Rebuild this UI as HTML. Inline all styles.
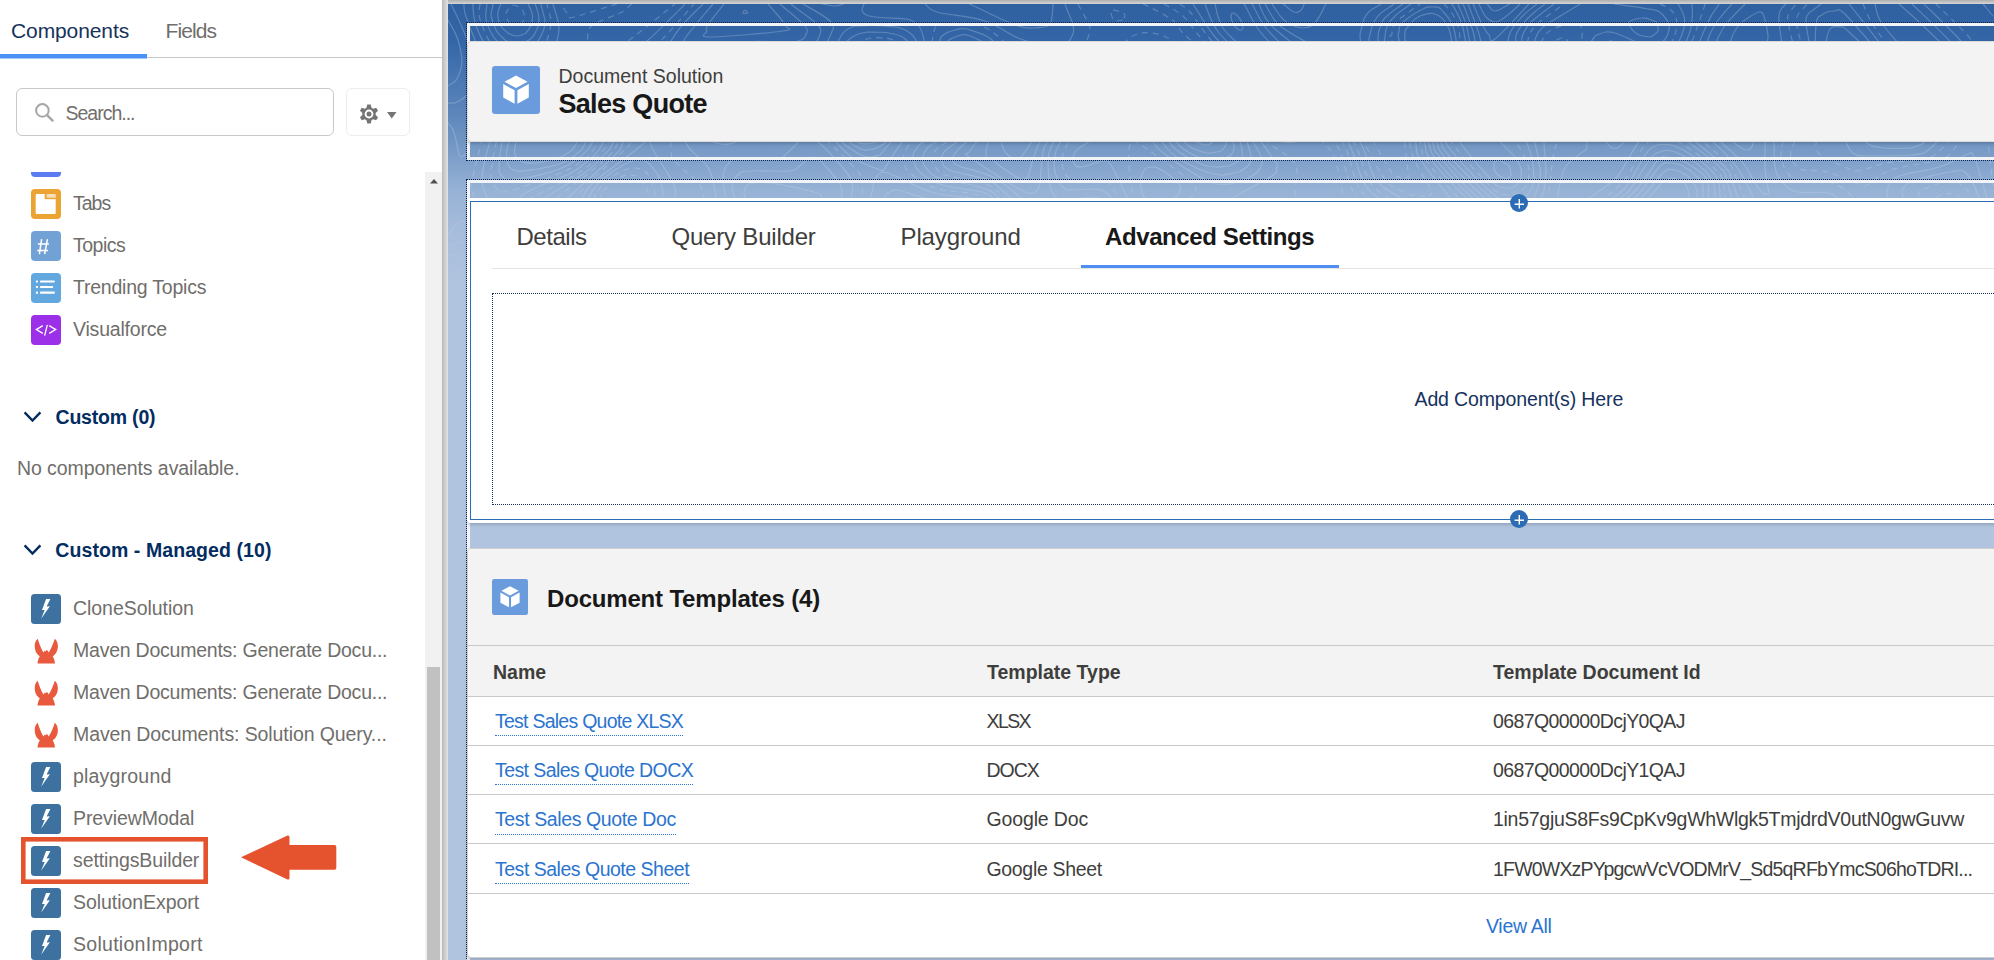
<!DOCTYPE html><html><head><meta charset="utf-8"><style>
html,body{margin:0;padding:0;width:1994px;height:960px;overflow:hidden;background:#fff;position:relative;font-family:"Liberation Sans", sans-serif}
.t{position:absolute;white-space:nowrap;line-height:1;font-family:"Liberation Sans", sans-serif}
</style></head><body>
<div class="t" style="left:11.0px;top:20.23px;font-size:21px;color:#16325c;letter-spacing:-0.100px;">Components</div>
<div class="t" style="left:165.5px;top:20.23px;font-size:21px;color:#706e6b;letter-spacing:-0.900px;">Fields</div>
<div style="position:absolute;left:0px;top:54px;width:147px;height:4px;background:#4b91f5"></div>
<div style="position:absolute;left:0px;top:58px;width:147px;height:1px;background:#a5c8fa"></div>
<div style="position:absolute;left:147px;top:57px;width:295px;height:1px;background:#c9c9c9"></div>
<div style="position:absolute;left:16px;top:88px;width:316px;height:46px;border:1px solid #c9c9c9;border-radius:6px;background:#fff"></div>
<svg width="20" height="20" viewBox="0 0 20 20" style="position:absolute;left:35px;top:103px"><circle cx="7.4" cy="7.4" r="6.3" fill="none" stroke="#a6a6a6" stroke-width="2"/><path d="M11.9 11.9 L17.6 17.6" stroke="#a6a6a6" stroke-width="2.4" stroke-linecap="round"/></svg>
<div class="t" style="left:65.5px;top:103.50px;font-size:19.5px;color:#706e6b;letter-spacing:-1.000px;">Search...</div>
<div style="position:absolute;left:346px;top:88px;width:62px;height:46px;border:1px solid #ececec;border-radius:6px;background:#fff"></div>
<svg width="20" height="20" viewBox="0 0 20 20" style="position:absolute;left:359.3px;top:104.3px"><g fill="#747474"><circle cx="10" cy="10" r="6.7"/><path d="M8.2 0.6 L11.8 0.6 L12.6 4.5 L7.4 4.5 Z" transform="rotate(0 10 10)"/><path d="M8.2 0.6 L11.8 0.6 L12.6 4.5 L7.4 4.5 Z" transform="rotate(60 10 10)"/><path d="M8.2 0.6 L11.8 0.6 L12.6 4.5 L7.4 4.5 Z" transform="rotate(120 10 10)"/><path d="M8.2 0.6 L11.8 0.6 L12.6 4.5 L7.4 4.5 Z" transform="rotate(180 10 10)"/><path d="M8.2 0.6 L11.8 0.6 L12.6 4.5 L7.4 4.5 Z" transform="rotate(240 10 10)"/><path d="M8.2 0.6 L11.8 0.6 L12.6 4.5 L7.4 4.5 Z" transform="rotate(300 10 10)"/></g><circle cx="10" cy="10" r="4.4" fill="#fff"/><circle cx="10" cy="10" r="2.5" fill="#747474"/></svg>
<svg width="10" height="7" viewBox="0 0 10 7" style="position:absolute;left:387px;top:111.5px"><path d="M0 0 L9.5 0 L4.75 6.5 Z" fill="#747474"/></svg>
<div style="position:absolute;left:0;top:172px;width:425px;height:788px;overflow:hidden">
</div>
<div style="position:absolute;left:31px;top:172px;width:30px;height:5px;background:#5a7cf0;border-radius:0 0 4px 4px"></div>
<div style="position:absolute;left:31px;top:189px;width:30px;height:30px"><svg width="30" height="30" viewBox="0 0 30 30" style="position:absolute;left:0;top:0"><rect width="30" height="30" rx="4" fill="#eba434"/><rect x="4.7" y="4.9" width="20" height="20.2" rx="1.2" fill="#fff"/><path d="M13.7 4.9 H24.7 V10.2 H13.7 Z" fill="#eba434"/><rect x="15.6" y="5" width="9.1" height="3.7" rx="1" fill="#f9dfb8"/></svg></div>
<div class="t" style="left:73.0px;top:193.70px;font-size:19.5px;color:#706e6b;letter-spacing:-1.000px;">Tabs</div>
<div style="position:absolute;left:31px;top:231px;width:30px;height:30px"><svg width="30" height="30" viewBox="0 0 30 30" style="position:absolute;left:0;top:0"><rect width="30" height="30" rx="4" fill="#72a2d5"/><path d="M10.6 8.1 L8.4 23.1 M16.5 8.1 L13.6 23.1 M6.9 13.1 H17.9 M6.2 19.4 H17" stroke="#fff" stroke-width="1.5" fill="none"/></svg></div>
<div class="t" style="left:73.0px;top:235.70px;font-size:19.5px;color:#706e6b;letter-spacing:-0.500px;">Topics</div>
<div style="position:absolute;left:31px;top:273px;width:30px;height:30px"><svg width="30" height="30" viewBox="0 0 30 30" style="position:absolute;left:0;top:0"><rect width="30" height="30" rx="4" fill="#62a8de"/><g fill="#fff"><rect x="4.9" y="7.4" width="2.1" height="2.2" rx="0.5"/><rect x="8.9" y="7.4" width="15" height="2.2" rx="1"/><rect x="4.9" y="12.9" width="2.1" height="2.2" rx="0.5"/><rect x="8.9" y="12.9" width="13.3" height="2.2" rx="1"/><rect x="4.9" y="18.6" width="2.1" height="2.2" rx="0.5"/><rect x="8.9" y="18.6" width="15" height="2.2" rx="1"/></g></svg></div>
<div class="t" style="left:73.0px;top:277.70px;font-size:19.5px;color:#706e6b;letter-spacing:-0.220px;">Trending Topics</div>
<div style="position:absolute;left:31px;top:315px;width:30px;height:30px"><svg width="30" height="30" viewBox="0 0 30 30" style="position:absolute;left:0;top:0"><rect width="30" height="30" rx="4" fill="#9c2fe8"/><path d="M11.8 10.6 L5.3 14.6 L11.8 18.4 M18.2 10.6 L24.7 14.6 L18.2 18.4 M16.3 9.8 L13.6 20.6" stroke="#fff" stroke-width="1.3" fill="none"/></svg></div>
<div class="t" style="left:73.0px;top:319.70px;font-size:19.5px;color:#706e6b;letter-spacing:-0.200px;">Visualforce</div>
<svg width="20" height="12" viewBox="0 0 20 12" style="position:absolute;left:23px;top:410.5px"><path d="M1.6 1.4 L9.5 9.6 L17.4 1.4" fill="none" stroke="#032d60" stroke-width="2.4"/></svg>
<div class="t" style="left:55.5px;top:408.30px;font-size:19.5px;color:#032d60;font-weight:bold;letter-spacing:-0.200px;">Custom (0)</div>
<div class="t" style="left:17.0px;top:458.70px;font-size:19.5px;color:#706e6b;letter-spacing:-0.080px;">No components available.</div>
<svg width="20" height="12" viewBox="0 0 20 12" style="position:absolute;left:23px;top:543.5px"><path d="M1.6 1.4 L9.5 9.6 L17.4 1.4" fill="none" stroke="#032d60" stroke-width="2.4"/></svg>
<div class="t" style="left:55.3px;top:540.90px;font-size:19.5px;color:#032d60;font-weight:bold;letter-spacing:0.080px;">Custom - Managed (10)</div>
<div style="position:absolute;left:31px;top:594px;width:30px;height:30px"><svg width="30" height="30" viewBox="0 0 30 30" style="position:absolute;left:0;top:0"><rect x="0" y="0" width="30" height="30" rx="3.5" fill="#3c71a0"/><path d="M15.1 4.9 L19.4 4.9 L15.6 12.4 L18.9 12.2 L10.1 24.8 L13.7 16.1 L11 16.1 Z" fill="#fff"/></svg></div>
<div class="t" style="left:73.0px;top:598.70px;font-size:19.5px;color:#706e6b;letter-spacing:-0.050px;">CloneSolution</div>
<div style="position:absolute;left:31px;top:636px;width:30px;height:30px"><svg width="30" height="30" viewBox="0 0 30 30" style="position:absolute;left:0;top:0"><path d="M6.7 2.75 C5 4 3.5 7 3.7 10.5 C3.9 14.5 5.5 18 7.75 19.4 L8.8 20.25 C7.5 22.5 6.7 25 6.5 27.6 L24 27.6 C23.8 25 23 22.5 21.7 20.25 L22.75 19.4 C25 18 26.7 14.5 26.9 10.5 C27 7 25.5 4 23.8 2.75 C22.5 7 20.5 12 17.75 16.5 L16.7 14.8 L15.7 13.9 L14.8 15.25 L13.6 14.8 L12.3 16.5 C9.8 12 8 7 6.7 2.75 Z" fill="#e8593d"/></svg></div>
<div class="t" style="left:73.0px;top:640.70px;font-size:19.5px;color:#706e6b;letter-spacing:-0.230px;">Maven Documents: Generate Docu...</div>
<div style="position:absolute;left:31px;top:678px;width:30px;height:30px"><svg width="30" height="30" viewBox="0 0 30 30" style="position:absolute;left:0;top:0"><path d="M6.7 2.75 C5 4 3.5 7 3.7 10.5 C3.9 14.5 5.5 18 7.75 19.4 L8.8 20.25 C7.5 22.5 6.7 25 6.5 27.6 L24 27.6 C23.8 25 23 22.5 21.7 20.25 L22.75 19.4 C25 18 26.7 14.5 26.9 10.5 C27 7 25.5 4 23.8 2.75 C22.5 7 20.5 12 17.75 16.5 L16.7 14.8 L15.7 13.9 L14.8 15.25 L13.6 14.8 L12.3 16.5 C9.8 12 8 7 6.7 2.75 Z" fill="#e8593d"/></svg></div>
<div class="t" style="left:73.0px;top:682.70px;font-size:19.5px;color:#706e6b;letter-spacing:-0.230px;">Maven Documents: Generate Docu...</div>
<div style="position:absolute;left:31px;top:720px;width:30px;height:30px"><svg width="30" height="30" viewBox="0 0 30 30" style="position:absolute;left:0;top:0"><path d="M6.7 2.75 C5 4 3.5 7 3.7 10.5 C3.9 14.5 5.5 18 7.75 19.4 L8.8 20.25 C7.5 22.5 6.7 25 6.5 27.6 L24 27.6 C23.8 25 23 22.5 21.7 20.25 L22.75 19.4 C25 18 26.7 14.5 26.9 10.5 C27 7 25.5 4 23.8 2.75 C22.5 7 20.5 12 17.75 16.5 L16.7 14.8 L15.7 13.9 L14.8 15.25 L13.6 14.8 L12.3 16.5 C9.8 12 8 7 6.7 2.75 Z" fill="#e8593d"/></svg></div>
<div class="t" style="left:73.0px;top:724.70px;font-size:19.5px;color:#706e6b;letter-spacing:-0.100px;">Maven Documents: Solution Query...</div>
<div style="position:absolute;left:31px;top:762px;width:30px;height:30px"><svg width="30" height="30" viewBox="0 0 30 30" style="position:absolute;left:0;top:0"><rect x="0" y="0" width="30" height="30" rx="3.5" fill="#3c71a0"/><path d="M15.1 4.9 L19.4 4.9 L15.6 12.4 L18.9 12.2 L10.1 24.8 L13.7 16.1 L11 16.1 Z" fill="#fff"/></svg></div>
<div class="t" style="left:73.0px;top:766.70px;font-size:19.5px;color:#706e6b;letter-spacing:0.200px;">playground</div>
<div style="position:absolute;left:31px;top:804px;width:30px;height:30px"><svg width="30" height="30" viewBox="0 0 30 30" style="position:absolute;left:0;top:0"><rect x="0" y="0" width="30" height="30" rx="3.5" fill="#3c71a0"/><path d="M15.1 4.9 L19.4 4.9 L15.6 12.4 L18.9 12.2 L10.1 24.8 L13.7 16.1 L11 16.1 Z" fill="#fff"/></svg></div>
<div class="t" style="left:73.0px;top:808.70px;font-size:19.5px;color:#706e6b;letter-spacing:-0.100px;">PreviewModal</div>
<div style="position:absolute;left:31px;top:846px;width:30px;height:30px"><svg width="30" height="30" viewBox="0 0 30 30" style="position:absolute;left:0;top:0"><rect x="0" y="0" width="30" height="30" rx="3.5" fill="#3c71a0"/><path d="M15.1 4.9 L19.4 4.9 L15.6 12.4 L18.9 12.2 L10.1 24.8 L13.7 16.1 L11 16.1 Z" fill="#fff"/></svg></div>
<div class="t" style="left:73.0px;top:850.70px;font-size:19.5px;color:#706e6b;letter-spacing:-0.110px;">settingsBuilder</div>
<div style="position:absolute;left:31px;top:888px;width:30px;height:30px"><svg width="30" height="30" viewBox="0 0 30 30" style="position:absolute;left:0;top:0"><rect x="0" y="0" width="30" height="30" rx="3.5" fill="#3c71a0"/><path d="M15.1 4.9 L19.4 4.9 L15.6 12.4 L18.9 12.2 L10.1 24.8 L13.7 16.1 L11 16.1 Z" fill="#fff"/></svg></div>
<div class="t" style="left:73.0px;top:892.70px;font-size:19.5px;color:#706e6b;letter-spacing:-0.050px;">SolutionExport</div>
<div style="position:absolute;left:31px;top:930px;width:30px;height:30px"><svg width="30" height="30" viewBox="0 0 30 30" style="position:absolute;left:0;top:0"><rect x="0" y="0" width="30" height="30" rx="3.5" fill="#3c71a0"/><path d="M15.1 4.9 L19.4 4.9 L15.6 12.4 L18.9 12.2 L10.1 24.8 L13.7 16.1 L11 16.1 Z" fill="#fff"/></svg></div>
<div class="t" style="left:73.0px;top:934.70px;font-size:19.5px;color:#706e6b;letter-spacing:0.280px;">SolutionImport</div>
<svg width="340" height="60" viewBox="0 0 340 60" style="position:absolute;left:0;top:830px"><rect x="23.3" y="9.3" width="182.4" height="42.4" fill="none" stroke="#e4532e" stroke-width="4.6"/><path d="M241 27.3 L287.5 5.5 Q289.5 5 289.5 7 L289.5 15 L334.5 15 Q336.3 15 336.3 17 L336.3 37.8 Q336.3 39.8 334.5 39.8 L289.5 39.8 L289.5 48 Q289.5 50 287.5 49.5 Z" fill="#e4532e"/></svg>
<div style="position:absolute;left:425px;top:172px;width:17px;height:788px;background:#f1f1f1"></div>
<div style="position:absolute;left:427px;top:667px;width:13px;height:293px;background:#c1c1c1"></div>
<svg width="8" height="5" viewBox="0 0 8 5" style="position:absolute;left:429.5px;top:178.5px"><path d="M0 4.5 L4 0 L8 4.5 Z" fill="#505050"/></svg>
<div style="position:absolute;left:442px;top:0px;width:6px;height:960px;background:linear-gradient(to right,#b9b9b9,#e3e3e3)"></div>
<div style="position:absolute;left:448px;top:0;width:1546px;height:960px;overflow:hidden;background:#b0c4df">
<div style="position:absolute;left:0;top:4px;width:1546px;height:300px;background:linear-gradient(to bottom,#2f60a0 0px,#3466a7 38px,#6089bd 115px,#779ac6 146px,#87a6ce 166px,#96b2d5 186px,#a6bcdb 225px,#b0c4df 280px)"></div>
<svg width="1546" height="330" viewBox="0 0 1546 330" style="position:absolute;left:0;top:4px"><defs><linearGradient id="fg" x1="0" y1="0" x2="0" y2="1"><stop offset="0" stop-color="#fff" stop-opacity="1"/><stop offset="0.5" stop-color="#fff" stop-opacity="0.8"/><stop offset="0.9" stop-color="#fff" stop-opacity="0"/></linearGradient><mask id="fm"><rect width="1546" height="330" fill="url(#fg)"/></mask></defs><g mask="url(#fm)" fill="none" stroke="rgba(255,255,255,0.22)" stroke-width="1.2"><path d="M573 153C577 148 591 128 595 120C599 112 599 112 599 108C598 104 596 99 592 96C588 93 580 91 576 90C572 89 570 90 567 92C564 93 562 93 559 99C557 105 555 122 554 129C553 136 553 138 554 141C555 144 556 147 558 149C560 151 564 155 567 155C570 156 572 153 573 153M944 132C944 130 947 121 947 117C946 113 944 108 942 105C940 102 936 100 933 100C930 99 926 100 924 102C922 104 922 108 922 111C922 114 925 118 927 122C929 126 934 131 936 133C938 135 941 134 942 134C943 134 944 132 944 132M88 159C92 158 102 157 108 155C114 153 119 150 123 147C126 144 128 141 129 138C130 135 129 132 127 129C126 126 122 124 118 123C114 122 107 120 102 120C97 120 91 121 87 122C83 123 81 123 78 126C75 129 71 133 69 137C67 141 66 146 67 150C68 154 71 157 75 158C79 160 86 159 88 159M737 285C739 284 745 280 747 276C750 272 751 268 751 264C751 260 750 255 747 252C744 249 740 247 735 247C730 248 722 251 718 255C714 259 711 266 711 270C710 274 712 277 714 279C715 281 717 284 720 285C723 286 726 287 729 287C732 287 736 285 737 285M53 0C52 2 50 6 50 9C49 12 51 18 52 21C54 24 57 27 60 29C63 31 66 32 69 32C72 32 76 30 78 29C80 27 82 24 83 21C84 18 85 12 84 9C83 6 81 2 80 0M580 174C581 169 585 154 589 144C593 134 602 124 605 117C608 110 607 108 607 105C607 102 604 98 602 96C600 94 599 92 594 90C590 88 578 85 573 84C568 84 566 85 563 87C560 89 558 86 554 96C550 106 540 137 538 147C537 157 541 152 545 156C549 160 559 167 564 170C569 174 570 174 573 175C576 176 579 174 580 174M91 165C94 164 107 162 114 159C121 156 128 151 132 147C136 143 138 139 138 135C139 131 137 126 134 123C131 120 126 118 120 116C114 115 105 114 99 114C93 113 89 114 84 115C79 117 74 119 70 123C66 127 62 135 60 141C58 147 58 156 60 160C62 165 64 166 69 167C74 168 87 165 91 165M760 141C762 140 767 137 767 135C767 133 765 129 762 127C759 125 754 123 750 122C746 122 743 124 741 125C739 126 740 127 740 129C741 131 742 133 744 135C746 137 750 139 753 140C756 141 759 141 760 141M1303 144C1304 143 1305 140 1305 138C1304 136 1304 134 1302 132C1300 130 1296 129 1293 128C1290 128 1285 128 1284 129C1282 130 1282 133 1283 135C1284 137 1287 140 1290 142C1293 144 1297 146 1299 146C1301 146 1303 144 1303 144M623 267C628 266 646 264 653 261C660 258 663 255 666 252C668 249 667 247 667 243C666 239 665 234 663 230C661 226 659 222 657 219C654 216 651 213 648 211C645 210 640 209 636 210C632 210 628 211 624 212C620 214 615 217 612 219C609 221 608 223 606 227C604 231 603 238 603 243C603 248 604 254 605 258C607 262 609 264 612 266C615 267 621 267 623 267M740 294C743 292 752 287 755 282C759 277 760 269 761 264C761 259 760 255 758 252C757 249 756 246 753 244C750 241 742 239 738 238C734 238 730 239 726 241C722 243 716 246 712 249C708 252 705 255 703 258C701 261 700 264 700 267C700 270 701 275 703 279C706 283 710 289 714 291C718 294 722 296 726 296C730 296 738 294 740 294M1342 300C1343 299 1346 296 1347 294C1348 292 1348 290 1347 288C1346 286 1343 281 1341 280C1339 278 1337 278 1335 279C1333 280 1331 285 1330 288C1329 291 1330 295 1331 297C1332 299 1333 301 1335 301C1337 302 1341 300 1342 300M45 0C45 2 43 8 43 12C44 16 46 22 48 26C50 30 54 33 57 36C60 38 65 39 69 39C73 39 78 38 81 36C84 34 87 30 88 27C90 24 91 20 91 15C91 10 88 2 87 0M795 24C795 22 794 17 792 15C790 12 788 10 786 9C784 9 783 10 783 12C783 14 784 19 786 21C787 23 790 26 792 26C794 27 795 24 795 24M586 189C587 188 590 188 592 180C593 172 593 154 596 144C600 134 609 124 612 117C615 110 615 108 615 105C615 102 614 99 611 96C609 93 605 90 600 87C596 84 590 82 585 81C580 80 574 79 570 80C566 80 564 81 561 82C558 84 556 84 552 91C548 98 544 114 539 123C534 132 525 142 522 147C519 152 513 147 521 153C530 159 562 180 573 186C584 192 584 188 586 189M77 174C83 173 102 169 111 165C120 162 127 157 132 153C137 149 139 147 141 144C143 141 145 139 145 135C145 131 144 124 141 120C138 116 132 113 126 111C120 109 110 108 102 108C94 107 87 108 81 110C75 111 71 114 68 117C64 120 62 122 60 126C57 130 56 132 54 138C53 144 51 159 51 165C51 171 53 170 54 172C55 174 56 175 60 176C64 176 74 174 77 174M773 147C774 146 777 143 778 141C778 139 779 138 777 135C776 132 773 126 768 122C763 119 752 116 747 114C742 113 740 114 737 114C734 114 732 114 731 117C730 120 728 125 730 129C732 133 736 139 741 142C746 146 754 148 759 149C764 150 771 147 773 147M1321 189C1320 184 1317 171 1317 162C1316 153 1318 141 1317 135C1317 129 1316 128 1314 126C1312 124 1309 122 1305 121C1301 119 1295 118 1290 118C1285 117 1279 116 1275 117C1271 117 1268 118 1266 119C1264 121 1264 124 1264 126C1264 128 1261 126 1267 132C1272 138 1287 150 1295 159C1302 168 1307 180 1311 185C1315 190 1315 189 1317 190C1319 191 1320 189 1321 189M740 303C743 301 754 298 759 294C764 289 767 283 768 276C769 269 767 258 766 252C765 246 764 245 762 242C760 239 757 236 754 234C751 232 748 231 744 231C740 231 742 229 732 232C722 236 696 250 687 253C678 256 685 255 681 249C677 242 666 221 661 213C656 205 654 206 651 204C648 202 646 201 642 201C638 201 635 201 630 202C625 203 616 206 612 207C608 209 605 210 603 213C601 216 599 220 598 225C597 230 597 239 597 246C597 253 599 261 600 265C601 270 603 272 606 274C609 275 606 276 618 275C630 273 666 260 681 263C696 267 704 291 711 298C718 304 721 303 726 303C731 304 738 303 740 303M1343 312C1345 310 1354 305 1356 301C1358 297 1359 294 1357 288C1355 282 1348 270 1344 265C1340 260 1335 259 1332 259C1329 259 1328 263 1326 265C1324 268 1324 268 1323 274C1322 280 1321 297 1321 303C1321 309 1322 308 1323 310C1324 312 1326 314 1329 315C1332 315 1341 312 1343 312M241 294C243 292 252 282 254 279C256 276 254 274 252 273C251 272 250 270 246 270C242 270 235 271 231 273C227 274 225 279 224 282C223 285 224 289 225 291C225 293 226 295 228 296C230 297 232 297 234 297C236 297 240 294 241 294M39 0C39 2 37 10 38 15C39 20 42 27 45 32C48 37 53 41 57 44C61 46 64 47 69 47C74 47 80 45 84 42C88 40 91 36 93 32C95 28 97 23 97 18C97 13 93 3 93 0M767 0C768 3 769 12 772 18C774 24 777 27 783 33C789 39 804 52 810 56C816 60 816 59 819 59C822 60 826 59 828 59C830 58 831 56 832 54C832 52 834 53 830 48C826 43 816 33 810 25C804 17 799 4 796 0M1311 45C1312 44 1315 43 1317 41C1319 39 1320 37 1320 33C1320 29 1318 20 1317 16C1316 12 1315 7 1311 8C1307 9 1296 16 1291 21C1287 26 1284 32 1283 36C1281 40 1283 40 1284 42C1285 44 1284 44 1288 45C1293 46 1307 45 1311 45M795 330C791 326 778 318 775 306C771 294 775 268 774 258C774 248 772 247 770 243C768 239 765 234 762 231C759 228 756 227 753 225C750 224 750 222 741 224C732 226 710 236 702 238C694 241 694 240 690 239C686 238 686 238 681 232C676 227 668 210 663 204C658 198 657 198 654 196C651 194 651 193 645 193C639 193 624 196 618 196C612 196 612 196 609 194C606 192 604 189 602 183C601 177 600 163 600 156C600 149 601 148 604 141C608 134 619 121 621 114C624 107 624 104 622 99C620 94 615 89 609 86C603 82 594 79 588 77C582 75 576 74 570 75C564 76 559 78 555 81C551 84 550 86 546 93C543 100 539 114 533 123C527 132 513 142 509 147C504 152 505 154 505 156C506 158 503 159 511 162C518 165 536 168 549 175C562 183 579 200 586 207C593 214 589 209 590 219C592 229 592 257 593 267C595 277 595 277 597 280C599 283 598 285 606 284C614 283 634 276 645 275C656 273 664 270 675 275C686 281 705 301 714 306C723 312 721 310 729 311C737 312 756 313 762 314C768 315 765 315 766 318C767 321 767 328 767 330M1011 210C1010 208 1009 204 1003 195C996 186 978 165 973 156C967 147 969 150 968 141C966 132 965 114 963 105C961 96 958 94 954 89C950 85 944 81 939 79C934 77 929 76 924 76C919 76 914 77 909 79C904 81 899 84 896 87C892 90 891 93 890 96C890 99 888 98 891 105C895 112 907 128 912 138C918 148 921 161 924 168C927 175 926 175 932 180C937 185 945 190 957 196C969 201 996 209 1005 211C1014 214 1010 212 1011 212C1012 212 1011 210 1011 210M295 93C295 92 298 87 297 87C296 86 289 89 288 90C286 91 287 93 288 93C289 94 294 93 295 93M772 156C774 155 781 153 783 151C785 149 786 147 786 144C786 141 785 136 784 132C782 128 780 126 777 123C773 120 768 116 763 114C757 112 749 109 744 108C739 107 736 106 732 107C728 107 725 107 723 110C721 113 719 118 720 123C722 128 726 136 731 141C736 146 743 150 750 153C757 155 768 155 772 156M1323 330C1328 328 1345 320 1352 315C1359 310 1362 308 1364 303C1366 298 1368 296 1365 288C1362 280 1351 260 1348 252C1345 244 1344 242 1346 237C1347 232 1350 227 1357 222C1364 217 1383 211 1389 207C1395 203 1393 201 1391 198C1390 195 1387 190 1380 189C1373 187 1358 190 1350 188C1342 187 1339 183 1335 179C1331 174 1328 171 1327 162C1325 153 1327 134 1326 126C1325 118 1324 119 1321 117C1318 115 1318 115 1308 113C1298 112 1269 108 1260 108C1251 108 1253 111 1252 114C1251 117 1246 118 1253 126C1259 134 1279 148 1290 165C1301 182 1314 212 1318 225C1323 238 1320 230 1319 243C1318 256 1314 292 1313 306C1313 320 1316 326 1317 330M1519 234C1520 232 1527 229 1530 225C1533 221 1534 216 1534 210C1534 204 1532 196 1529 189C1527 182 1522 173 1518 169C1514 165 1512 166 1503 168C1494 169 1473 174 1465 177C1457 180 1458 181 1456 183C1454 185 1454 186 1454 189C1455 192 1453 192 1458 198C1464 204 1480 219 1487 225C1494 231 1498 233 1503 234C1508 236 1516 234 1519 234M228 312C231 310 240 307 246 303C252 298 260 290 265 285C269 280 271 276 271 273C272 270 271 266 269 264C267 262 262 261 258 260C254 259 248 259 243 259C238 260 232 261 228 262C224 263 221 264 219 267C216 270 214 273 213 279C213 285 214 298 215 303C216 308 217 310 219 311C221 313 227 312 228 312M945 297C946 296 949 292 949 288C949 284 947 278 945 275C943 272 939 269 936 268C933 267 929 268 927 269C925 270 923 272 923 276C923 280 925 287 928 291C930 295 933 298 936 299C939 300 943 297 945 297M91 330C90 328 85 321 81 319C77 316 71 314 66 314C61 314 55 316 51 319C47 321 42 328 40 330M757 0C759 5 763 19 771 29C779 39 796 53 804 60C812 66 816 66 822 67C828 68 836 67 840 66C844 65 845 62 846 60C847 58 849 57 844 51C840 45 824 32 818 24C811 16 807 4 804 0M1039 0C1041 1 1043 7 1047 7C1051 7 1059 1 1062 0M1297 0C1293 4 1282 15 1277 21C1273 27 1271 32 1269 36C1268 40 1267 45 1268 48C1269 51 1266 55 1275 56C1284 58 1311 58 1320 58C1329 57 1328 57 1331 54C1333 51 1334 49 1334 42C1334 35 1330 19 1331 12C1331 5 1336 2 1338 0M1488 78C1489 77 1491 74 1491 72C1492 70 1492 66 1491 63C1490 60 1487 55 1485 54C1483 52 1480 50 1479 53C1478 55 1478 66 1479 70C1480 74 1480 74 1482 76C1484 77 1487 78 1488 78M292 108C294 107 299 106 303 103C307 101 311 97 314 93C317 89 321 84 321 81C322 78 321 77 319 75C317 73 313 72 309 71C305 71 302 71 297 72C292 73 286 76 282 78C278 80 275 82 273 85C271 87 269 90 269 93C268 96 269 100 271 102C272 104 275 107 279 108C283 109 290 108 292 108M803 330C800 324 790 308 786 294C782 280 780 256 777 245C774 233 768 229 765 225C762 220 760 220 756 219C752 218 752 216 744 218C736 220 714 228 705 230C696 232 697 232 693 230C689 229 686 228 682 222C677 216 670 203 666 197C662 191 660 190 657 188C654 186 654 185 648 185C642 185 630 186 624 186C618 186 618 186 615 183C612 181 609 176 608 171C606 166 606 158 607 153C607 148 608 146 612 139C616 133 627 120 630 114C634 108 632 108 632 105C632 102 632 100 629 96C626 92 621 86 615 83C609 79 602 76 594 74C586 72 576 70 570 71C564 71 559 74 555 76C551 79 550 79 545 87C541 95 536 112 528 122C520 132 503 141 497 147C492 153 494 154 494 156C493 158 495 160 496 162C498 164 498 165 504 167C510 169 527 172 534 174C541 176 540 174 547 180C554 186 572 202 578 210C585 218 584 219 586 231C587 243 587 271 588 282C589 293 589 292 591 294C593 297 592 299 600 297C608 294 628 283 639 281C650 278 660 280 666 281C672 282 671 281 678 286C685 291 697 304 708 310C719 316 736 318 744 321C752 325 753 329 755 330M1177 123C1179 121 1187 115 1189 111C1192 107 1193 103 1193 99C1192 95 1189 89 1185 85C1181 82 1174 80 1170 79C1166 78 1166 80 1164 81C1162 82 1160 83 1159 87C1158 91 1156 99 1156 105C1157 111 1162 118 1164 121C1166 124 1168 124 1170 124C1172 124 1175 123 1177 123M55 231C56 230 60 230 62 225C63 220 63 210 65 204C67 198 70 195 73 192C77 189 79 188 87 184C95 180 114 174 123 169C132 164 136 160 141 156C146 152 150 148 152 144C155 140 155 138 156 135C157 132 157 127 155 123C154 119 152 115 149 111C146 107 143 104 138 101C133 99 129 96 120 95C111 94 93 94 84 95C75 96 70 98 65 102C59 106 54 110 50 117C46 124 44 131 41 141C38 151 34 166 34 177C35 188 42 199 44 207C46 215 46 221 47 225C48 229 50 229 51 230C52 231 54 231 55 231M781 162C783 161 790 158 792 156C794 154 795 151 794 147C794 143 792 137 790 132C787 127 784 123 780 119C776 116 772 114 765 110C758 107 742 103 735 101C728 99 726 98 723 99C720 99 716 100 714 102C712 104 712 108 712 111C711 114 711 118 713 123C716 128 720 138 726 144C733 150 746 157 753 160C760 163 763 163 768 163C773 163 779 162 781 162M1516 240C1519 238 1528 236 1532 231C1536 226 1539 219 1540 213C1541 207 1541 205 1539 195C1536 185 1530 160 1526 153C1523 146 1524 149 1518 151C1512 153 1502 160 1491 163C1480 167 1463 168 1455 171C1447 173 1446 174 1444 177C1441 180 1439 185 1439 189C1440 193 1437 193 1446 201C1455 209 1484 229 1494 236C1504 242 1502 239 1506 240C1510 241 1514 240 1516 240M441 282C443 280 450 276 453 273C456 270 457 265 456 261C456 257 453 252 450 249C447 246 442 245 438 245C434 245 429 248 426 251C423 254 423 259 423 264C423 269 425 276 428 279C431 282 438 282 441 282M214 330C219 327 233 320 243 313C253 306 265 295 272 288C280 281 284 275 286 270C289 265 289 261 287 258C285 255 282 254 276 253C270 252 258 251 249 251C240 251 231 253 225 255C219 256 215 258 212 261C209 264 207 262 206 273C204 284 204 320 203 330M1065 330C1067 328 1074 318 1076 315C1079 312 1078 310 1078 309C1077 308 1081 305 1075 306C1070 307 1051 312 1045 315C1039 318 1040 318 1039 321C1038 324 1038 328 1038 330M97 330C95 327 89 318 84 315C79 311 72 309 66 309C60 309 53 311 48 315C43 318 36 327 33 330M25 0C25 4 25 13 28 21C30 29 38 43 42 50C46 57 50 59 54 62C58 65 64 67 69 67C74 67 81 65 87 61C93 57 102 48 106 42C110 36 111 31 111 24C111 17 106 4 105 0M745 0C749 6 758 22 767 33C777 44 795 60 804 66C813 73 812 72 822 73C832 75 855 70 864 76C873 82 871 98 877 108C883 118 894 126 900 138C907 150 910 168 915 177C919 186 923 188 928 192C933 196 935 197 945 202C955 207 973 212 987 219C1001 227 1018 243 1029 248C1040 254 1047 252 1053 252C1059 252 1065 249 1067 246C1070 243 1070 238 1070 234C1069 230 1072 231 1065 225C1058 219 1039 212 1026 201C1013 190 992 167 984 157C976 147 979 150 977 141C975 132 974 112 971 102C968 92 962 86 957 81C952 76 948 74 942 71C936 68 927 65 921 64C915 63 914 64 906 65C898 66 882 71 876 72C870 73 871 76 867 72C863 67 862 56 854 48C847 40 830 29 823 21C815 13 813 4 811 0M1031 0C1032 2 1035 10 1038 13C1041 16 1044 18 1047 18C1050 18 1052 17 1056 14C1060 11 1070 2 1072 0M1284 0C1282 2 1275 10 1271 15C1267 20 1265 24 1262 30C1260 36 1258 40 1256 48C1254 56 1256 67 1251 75C1246 83 1231 91 1226 96C1221 101 1219 100 1221 105C1223 110 1229 120 1238 129C1247 138 1268 154 1276 162C1284 170 1281 168 1285 180C1290 192 1298 222 1301 237C1305 252 1305 256 1305 267C1305 278 1303 296 1300 306C1297 316 1289 326 1287 330M1427 0C1428 3 1428 10 1433 18C1438 26 1451 39 1459 51C1466 63 1472 82 1476 89C1480 97 1482 96 1485 97C1488 98 1494 99 1497 98C1500 97 1501 96 1502 93C1503 90 1504 86 1504 81C1505 76 1505 68 1504 63C1503 58 1502 53 1500 49C1498 45 1499 45 1491 37C1483 29 1458 6 1451 0M446 75C448 74 456 73 459 70C462 68 465 64 466 60C467 56 466 49 465 45C463 41 460 37 456 34C452 31 447 30 441 29C435 28 426 28 420 28C414 29 412 29 408 31C404 33 400 35 398 39C396 43 393 50 393 54C394 58 395 60 400 63C405 66 415 70 422 72C430 74 442 74 446 75M290 117C292 116 300 114 305 111C310 108 315 104 320 99C326 94 334 86 337 81C340 76 340 75 338 72C336 69 329 66 324 64C319 63 313 62 306 63C299 64 291 66 284 69C278 72 271 75 267 79C263 83 260 88 259 93C258 98 259 103 261 106C263 110 268 114 273 116C278 118 287 117 290 117M791 168C793 167 798 164 800 162C802 160 804 157 803 153C803 149 801 144 799 138C796 132 791 125 787 120C783 115 784 115 774 110C764 105 735 95 725 90C715 85 717 85 714 81C710 77 707 71 705 68C703 66 701 65 699 67C697 68 695 70 696 78C696 86 701 106 703 114C705 122 706 124 708 129C711 134 713 137 717 142C721 147 728 153 735 157C742 161 750 165 756 167C762 169 768 171 774 171C780 171 788 168 791 168M1311 97C1309 97 1304 99 1299 98C1294 98 1289 98 1284 96C1279 94 1273 90 1270 87C1267 84 1265 80 1266 78C1266 76 1268 74 1272 72C1275 70 1282 68 1287 67C1292 66 1298 66 1302 66C1306 67 1310 68 1314 69C1318 70 1321 73 1324 75C1326 77 1327 78 1327 81C1327 84 1325 87 1323 90C1320 93 1313 96 1311 97M1170 144C1176 138 1198 118 1205 111C1212 104 1211 105 1212 102C1212 99 1210 96 1207 93C1205 90 1202 87 1198 84C1194 81 1187 76 1182 74C1177 71 1174 70 1170 70C1166 70 1164 71 1161 73C1158 74 1157 74 1155 79C1153 84 1149 98 1148 105C1147 112 1148 115 1150 120C1152 125 1156 133 1158 137C1160 141 1162 143 1164 144C1166 145 1169 144 1170 144M324 219C331 217 358 210 366 207C374 204 372 204 373 201C374 198 374 194 373 192C372 190 374 190 366 188C358 185 335 181 324 179C313 178 306 178 301 180C296 182 297 186 296 189C296 192 298 196 300 201C303 206 308 213 312 216C316 219 322 219 324 219M1352 330C1356 328 1369 320 1374 315C1379 310 1381 308 1382 303C1383 298 1383 296 1380 288C1378 280 1368 260 1366 252C1364 244 1367 243 1369 240C1371 237 1371 236 1377 233C1383 230 1397 226 1405 222C1413 218 1420 213 1425 210C1430 208 1428 208 1434 209C1440 211 1450 213 1461 219C1472 224 1488 238 1497 242C1506 247 1506 246 1512 245C1518 244 1528 241 1533 237C1538 234 1543 225 1545 222M946 315C947 314 954 310 956 306C959 302 961 296 961 291C961 286 960 278 957 273C955 268 952 263 948 260C944 256 941 254 933 252C925 250 911 253 900 250C889 247 874 237 867 234C860 231 860 233 858 233C856 233 853 234 852 236C851 237 850 238 850 240C849 242 849 245 851 249C853 253 858 261 861 265C864 268 864 268 870 269C876 271 891 270 897 272C903 274 902 275 906 282C910 288 920 306 924 312C928 318 929 317 933 317C937 317 943 315 946 315M442 294C444 293 450 290 453 288C455 286 457 283 459 280C461 277 463 274 463 270C464 266 465 262 464 258C464 254 462 252 460 249C459 246 456 244 453 242C450 241 448 239 444 239C440 238 436 238 432 238C428 239 425 241 422 243C420 245 418 244 417 252C416 260 415 284 415 291C415 298 416 294 417 295C418 296 419 297 423 297C427 297 439 294 442 294M1076 330C1078 328 1085 320 1089 315C1092 310 1094 305 1096 300C1097 295 1099 289 1098 285C1097 281 1094 279 1092 278C1090 277 1088 277 1083 280C1078 283 1073 291 1065 297C1057 302 1041 308 1036 312C1030 316 1031 318 1030 321C1030 324 1030 328 1030 330M588 330C590 327 595 318 600 312C604 306 610 301 615 297C620 293 626 290 631 288C637 286 642 285 648 285C654 285 660 284 669 289C678 293 690 306 702 313C714 320 735 327 742 330M387 321C388 320 394 317 396 315C398 313 400 310 399 308C398 307 394 306 390 306C386 307 377 310 375 312C372 314 373 317 375 319C377 320 385 321 387 321M1447 330C1445 329 1437 325 1434 325C1431 325 1429 329 1428 330M16 0C16 3 15 6 20 18C24 30 39 64 43 75C47 86 46 78 44 84C42 90 33 104 29 114C26 124 23 138 21 144C19 150 17 151 15 152C13 153 12 154 11 150C10 146 8 134 6 129C5 124 1 120 0 119M0 232C2 229 10 215 15 217C20 218 27 237 31 243C36 249 38 251 42 252C46 254 50 255 54 253C58 252 65 248 69 244C73 241 76 237 78 231C81 225 83 212 85 207C87 202 82 205 90 199C98 193 124 177 135 170C146 162 150 158 154 153C159 148 162 146 164 141C166 136 168 132 166 123C163 114 149 93 146 84C143 75 144 73 146 69C148 65 148 64 156 60C164 56 179 52 193 42C206 32 230 7 237 0M374 0C376 0 383 2 387 2C391 2 395 0 396 0M521 0C529 3 556 17 567 21C578 25 580 24 585 24C590 24 594 23 597 23C600 22 602 22 603 19C604 15 605 3 605 0M1084 330C1086 328 1092 323 1095 318C1098 313 1102 306 1105 300C1107 294 1110 290 1111 285C1111 280 1111 276 1110 273C1109 270 1108 268 1104 265C1100 262 1090 261 1086 255C1081 249 1081 236 1078 231C1076 226 1080 228 1072 222C1064 216 1043 209 1029 198C1016 187 998 168 990 158C982 148 984 150 981 140C978 130 977 108 974 99C972 90 970 89 966 85C962 80 958 76 951 71C944 67 934 62 927 60C920 57 916 56 909 55C902 55 893 57 888 56C883 56 883 56 879 54C875 51 873 47 865 42C857 37 839 28 831 21C823 14 820 4 817 0M1025 0C1027 4 1032 17 1035 22C1038 28 1039 29 1041 31C1043 33 1040 40 1047 35C1054 30 1075 6 1081 0M1271 0C1270 3 1265 7 1260 18C1255 28 1246 53 1240 63C1235 73 1231 74 1227 76C1223 79 1221 79 1218 80C1215 80 1217 81 1209 79C1201 76 1178 66 1170 63C1162 61 1164 64 1161 65C1158 66 1157 66 1155 69C1153 72 1150 76 1148 81C1145 86 1143 89 1142 99C1140 109 1140 133 1139 141C1138 149 1139 144 1136 147C1132 150 1123 156 1119 161C1115 166 1114 170 1113 176C1112 181 1110 188 1110 192C1110 196 1111 200 1113 203C1115 205 1115 209 1122 206C1129 202 1149 189 1157 183C1165 177 1164 179 1170 172C1176 164 1184 146 1191 138C1197 130 1203 126 1209 124C1215 122 1215 121 1224 126C1233 132 1256 150 1264 156C1272 162 1270 162 1273 165C1275 168 1275 160 1279 177C1284 194 1297 249 1300 267C1303 285 1300 279 1299 285C1298 291 1296 298 1294 303C1292 308 1290 312 1287 316C1284 321 1276 328 1274 330M1545 116C1541 114 1525 106 1520 102C1515 98 1517 98 1515 90C1514 82 1513 65 1512 57C1510 49 1514 52 1506 42C1498 32 1471 7 1464 0M456 78C458 76 465 72 468 69C470 66 471 62 472 57C472 52 472 47 470 42C469 37 466 32 462 29C458 26 455 24 447 23C439 22 422 21 414 22C406 22 406 22 402 24C398 26 396 27 393 32C390 37 384 49 382 54C381 59 378 59 385 63C393 67 417 75 429 77C441 80 452 78 456 78M783 180C786 179 799 175 804 172C809 169 812 166 813 162C815 158 815 156 812 150C809 144 802 133 797 126C792 119 791 115 780 108C769 102 744 96 732 86C720 77 714 58 708 52C702 45 702 49 699 49C696 49 695 49 693 51C690 53 686 57 684 63C682 69 677 75 680 87C683 99 697 124 703 135C710 146 713 147 721 153C728 159 742 167 750 172C758 176 763 179 768 180C773 181 780 180 783 180M816 330C813 322 803 297 798 281C793 266 792 249 787 237C783 225 775 214 771 208C767 203 768 204 765 203C762 202 765 199 756 201C747 203 720 214 711 216C702 219 705 217 702 217C699 217 696 216 693 214C690 211 689 211 684 203C679 194 668 169 663 161C658 154 659 157 654 157C649 158 638 163 633 163C628 163 627 162 626 159C625 156 624 151 628 147C631 143 643 137 648 133C653 129 653 127 655 123C657 119 659 112 659 108C659 104 662 103 655 96C647 89 625 73 612 67C599 61 584 61 576 60C568 60 566 61 561 63C556 65 552 68 549 71C546 75 545 75 540 83C535 90 526 110 521 117C516 124 516 122 510 126C504 130 489 137 483 141C477 145 476 149 475 153C474 157 476 162 479 165C482 168 482 171 491 174C500 177 523 180 532 183C542 186 543 187 549 192C555 197 562 206 567 213C571 220 574 225 576 234C577 243 579 254 577 267C575 280 569 302 564 311C559 321 557 321 549 324C541 327 524 329 519 330M1299 85C1298 85 1294 85 1293 84C1292 83 1293 82 1294 81C1295 80 1299 80 1300 81C1301 82 1299 84 1299 85M241 330C252 321 295 287 308 276C321 265 314 270 317 264C320 258 325 245 328 240C332 235 332 234 336 232C340 229 344 227 351 224C358 222 372 220 378 217C384 215 386 214 388 210C391 206 392 200 393 195C394 190 395 186 392 180C388 174 377 161 372 157C367 152 367 153 363 154C359 155 352 162 348 165C344 167 346 167 339 167C332 168 311 166 303 167C295 167 294 167 291 170C288 173 284 175 284 183C285 191 292 208 292 216C293 224 291 225 288 228C284 231 284 233 273 235C262 237 235 238 222 241C209 245 199 251 194 255C188 259 190 258 190 264C190 270 193 282 194 288C194 294 194 298 193 303C192 308 190 314 186 318C183 322 176 328 174 330M1364 330C1368 328 1383 319 1389 315C1394 311 1395 310 1396 306C1397 302 1397 302 1394 294C1391 286 1379 263 1376 255C1373 247 1375 249 1377 246C1379 243 1376 242 1386 238C1396 234 1428 222 1440 220C1452 218 1452 221 1461 225C1470 229 1484 240 1491 244C1498 248 1500 249 1506 250C1512 250 1518 250 1524 248C1530 245 1542 237 1545 235M401 330C404 327 412 319 420 314C428 310 444 307 451 303C458 299 459 298 462 293C465 288 469 279 470 273C472 267 472 262 472 258C471 254 469 249 466 246C464 243 462 239 456 237C450 235 438 232 432 232C426 232 423 234 420 235C417 236 416 237 414 240C412 242 411 243 410 249C409 255 408 270 406 276C405 282 404 282 402 285C400 288 400 289 393 292C386 295 368 300 361 303C355 306 355 307 353 309C352 311 352 313 352 315C353 317 353 318 355 321C357 324 365 328 366 330M1190 291C1190 290 1190 288 1188 287C1186 287 1180 287 1179 288C1178 289 1180 292 1182 293C1184 293 1189 291 1190 291M111 330C109 328 104 319 100 315C97 311 94 309 90 307C86 304 80 301 75 300C70 298 66 298 63 298C60 298 58 298 54 299C50 301 47 302 42 306C37 310 27 317 23 321C18 325 17 328 16 330M1461 330C1457 327 1444 315 1437 311C1430 307 1426 306 1422 305C1418 305 1418 305 1416 306C1414 307 1411 308 1410 312C1410 316 1413 327 1413 330M3 0C6 6 17 28 20 39C24 50 25 62 26 69C27 76 26 77 24 81C23 85 21 89 18 92C15 95 12 97 9 98C6 100 2 99 0 99M355 0C360 3 379 13 383 18C388 23 384 26 383 30C381 34 378 41 375 45C372 48 369 50 366 52C363 53 366 54 357 54C348 53 324 50 315 50C306 50 310 48 300 51C290 54 266 64 257 69C248 74 249 76 246 81C244 86 242 92 242 99C241 106 243 114 245 120C248 126 250 129 255 132C260 136 267 139 273 140C279 141 284 140 291 137C298 134 303 131 318 121C333 111 368 82 381 74C394 66 385 72 396 73C407 75 436 82 447 84C458 85 456 83 459 82C462 82 465 80 467 78C470 76 472 72 474 68C476 64 477 59 477 54C478 49 477 41 476 36C475 31 474 26 471 22C468 19 467 17 459 15C451 14 428 14 421 12C414 10 415 8 414 6C414 4 416 1 416 0M477 0C479 1 479 5 489 8C499 11 524 12 537 17C550 21 560 30 570 34C580 38 591 40 597 42C602 44 610 46 606 48C601 50 578 51 570 53C562 55 560 57 555 61C550 65 545 69 539 78C533 87 524 106 518 114C513 122 514 119 507 123C500 127 482 135 476 138C469 141 471 142 469 144C467 146 465 150 465 153C465 156 467 161 469 165C472 169 478 173 483 176C488 179 490 180 498 182C506 184 526 186 534 188C542 190 542 192 546 195C549 198 552 200 555 204C558 209 563 216 566 222C569 228 571 236 572 243C573 250 573 257 572 264C571 271 569 278 566 285C563 292 561 298 557 303C553 308 551 310 543 312C535 314 520 315 510 315C500 315 486 315 480 313C474 311 474 312 474 303C474 294 479 271 479 261C478 251 475 248 472 243C469 238 466 237 462 234C458 231 455 229 447 228C439 227 418 227 411 228C404 229 405 227 403 234C402 241 402 259 401 267C399 275 397 278 393 282C389 285 386 287 378 289C370 292 352 295 346 297C340 299 340 300 339 303C338 306 339 314 341 318C343 322 349 328 351 330M823 330C822 326 820 315 817 306C814 297 807 286 804 276C801 266 801 256 797 243C794 230 784 210 783 201C781 192 781 197 788 192C795 187 819 176 825 171C832 166 828 168 828 165C828 162 833 166 826 156C819 146 802 120 788 108C773 96 747 90 738 84C728 78 733 81 730 75C727 69 724 56 720 50C716 45 712 42 708 41C704 39 700 38 696 39C692 40 689 39 684 45C680 51 673 68 669 74C665 79 666 79 663 79C660 80 653 81 648 79C643 77 638 74 631 69C624 64 609 53 607 48C605 43 615 44 618 41C621 38 624 33 625 30C626 27 626 26 625 21C624 16 618 4 617 0M878 0C876 3 871 15 867 19C863 23 860 24 855 24C850 24 842 21 837 17C832 13 826 3 824 0M1092 330C1094 328 1097 326 1103 318C1108 310 1121 290 1125 282C1128 274 1126 274 1125 270C1123 266 1120 262 1116 257C1112 252 1103 246 1099 240C1094 234 1099 229 1088 222C1077 215 1051 209 1035 197C1019 186 1000 163 992 153C983 143 987 146 985 138C982 130 981 110 979 102C977 94 976 92 972 87C969 82 965 77 957 71C949 65 930 56 923 51C916 46 915 46 914 42C912 38 912 34 912 30C913 26 915 19 916 15C918 11 920 8 923 6C926 4 932 1 933 0M1020 0C1022 5 1028 20 1031 30C1034 40 1036 56 1038 63C1041 70 1043 70 1046 72C1049 74 1053 76 1056 76C1059 76 1060 75 1062 74C1064 73 1065 75 1065 69C1065 63 1061 46 1060 39C1060 32 1061 31 1063 27C1065 23 1068 20 1072 15C1076 10 1086 2 1089 0M1401 0C1409 10 1435 42 1446 59C1457 75 1460 89 1467 100C1474 111 1484 117 1488 123C1492 129 1492 131 1490 135C1489 139 1483 144 1479 147C1475 150 1474 150 1464 151C1454 152 1426 152 1416 152C1406 152 1410 151 1407 150C1404 149 1403 148 1401 144C1398 140 1396 131 1391 123C1385 115 1373 104 1368 97C1363 90 1363 90 1362 81C1361 72 1363 56 1362 45C1361 34 1358 24 1358 18C1357 12 1359 12 1361 9C1364 6 1371 2 1373 0M1545 99C1543 98 1536 96 1533 94C1530 92 1529 94 1526 87C1524 80 1521 60 1519 51C1516 42 1519 44 1512 36C1505 28 1482 6 1476 0M250 330C255 326 271 311 282 303C293 295 309 291 318 282C327 273 331 256 336 249C340 242 341 241 345 238C349 235 352 233 360 231C368 229 387 227 393 226C399 224 396 228 398 222C400 216 403 196 404 189C405 182 405 181 404 177C402 173 402 172 396 165C390 158 375 142 369 137C363 132 362 134 360 134C358 134 358 132 354 135C350 138 340 149 336 152C332 156 334 156 327 156C320 156 298 154 291 155C284 155 285 155 282 158C279 161 275 165 275 174C275 183 280 202 281 210C281 218 281 216 279 219C277 222 277 225 267 227C257 230 234 231 219 236C204 240 185 251 178 255C171 259 176 256 177 261C179 266 186 281 188 288C189 295 189 298 187 303C185 308 181 316 175 321C169 326 157 328 154 330M940 330C944 328 958 320 963 315C968 310 970 307 971 300C971 293 970 281 968 273C966 265 962 258 957 253C952 247 947 244 939 240C931 237 922 237 909 233C896 228 869 215 858 212C847 208 847 210 843 211C839 212 836 214 834 216C832 218 829 221 828 224C827 227 826 231 826 234C826 237 822 234 827 243C832 252 848 280 855 289C862 297 862 294 867 295C872 296 883 294 888 295C893 297 895 300 897 302C899 305 900 309 900 312C900 315 902 315 899 318C895 321 884 328 881 330M1472 330C1464 323 1435 296 1422 286C1409 276 1402 275 1396 270C1391 265 1390 262 1389 258C1389 254 1385 253 1392 249C1399 245 1422 235 1431 232C1440 228 1440 228 1446 228C1452 229 1456 229 1464 233C1472 236 1484 246 1491 249C1498 253 1500 254 1506 255C1512 255 1518 255 1524 253C1530 251 1542 245 1545 243M1201 306C1202 305 1207 304 1209 302C1211 300 1214 297 1215 294C1215 291 1215 288 1214 285C1212 282 1212 278 1206 277C1200 275 1185 275 1176 275C1167 276 1157 279 1154 282C1150 285 1153 288 1156 291C1158 294 1165 299 1170 302C1175 305 1180 306 1185 307C1190 307 1198 306 1201 306M617 330C617 328 616 322 618 318C619 314 622 309 625 306C628 303 632 300 636 299C640 297 644 296 648 297C652 297 656 297 663 301C670 305 679 314 687 319C695 324 705 328 708 330M419 330C421 329 427 323 432 321C437 319 444 319 450 319C456 318 462 319 466 321C470 323 473 328 474 330M343 0C347 4 366 16 370 21C375 26 372 30 371 33C370 36 367 40 364 42C360 44 357 46 348 46C339 47 318 44 309 44C300 44 301 44 291 47C281 50 260 59 252 63C243 67 244 69 241 72C239 75 238 76 237 81C235 86 233 96 233 105C233 114 235 126 236 132C237 138 237 138 241 144C246 150 256 156 261 165C266 175 268 193 269 201C271 209 269 210 268 213C266 216 265 217 259 219C253 221 243 220 231 224C219 227 199 239 186 242C173 245 160 242 153 243C146 244 145 245 143 246C141 247 140 249 139 252C139 255 135 257 141 261C147 265 167 272 174 275C181 279 179 281 180 285C181 289 182 293 182 297C181 301 180 306 177 310C174 313 170 317 165 319C160 321 156 322 150 323C144 323 140 324 132 321C124 317 116 308 105 302C94 295 74 287 67 282C60 277 59 280 63 273C66 266 80 251 88 240C95 229 95 222 107 207C120 192 154 164 165 153C176 142 172 146 174 141C176 136 178 134 176 126C175 118 166 98 165 90C163 82 166 80 168 76C170 73 170 72 177 69C184 65 200 61 209 54C219 47 224 33 232 24C239 15 251 4 255 0M856 0C856 1 854 6 852 7C850 8 849 10 846 8C843 7 837 1 835 0M1244 0C1244 2 1245 10 1244 15C1244 20 1242 28 1240 33C1238 38 1235 44 1232 48C1229 52 1226 56 1221 59C1216 61 1212 64 1203 62C1194 61 1172 52 1164 51C1156 50 1158 53 1155 54C1152 55 1154 51 1149 60C1144 68 1134 93 1125 104C1116 115 1103 120 1098 126C1093 132 1096 131 1096 138C1096 145 1098 160 1098 168C1098 176 1097 180 1096 186C1094 192 1092 199 1089 203C1086 206 1082 208 1077 208C1072 208 1062 206 1056 204C1050 201 1048 203 1038 195C1029 187 1007 166 999 156C991 146 991 147 989 138C986 129 985 110 983 102C981 94 980 92 977 87C974 82 972 80 964 72C955 64 932 49 925 42C918 35 922 34 922 30C923 26 924 22 926 18C928 14 929 12 933 9C936 6 944 2 946 0M1015 0C1017 4 1021 16 1025 27C1028 38 1030 60 1034 69C1038 78 1042 79 1047 82C1052 85 1058 86 1062 87C1066 87 1067 86 1069 84C1071 82 1074 82 1074 75C1073 68 1068 47 1068 39C1067 31 1068 31 1070 27C1072 23 1075 20 1079 15C1084 10 1094 2 1097 0M1535 0C1537 2 1543 10 1545 12M1464 144C1460 144 1444 145 1437 144C1430 143 1425 144 1419 139C1413 134 1408 124 1401 116C1394 108 1379 98 1374 92C1369 86 1370 85 1369 81C1368 77 1368 79 1367 69C1367 59 1367 31 1368 21C1369 11 1371 13 1374 11C1377 8 1382 7 1386 7C1390 7 1389 2 1398 11C1407 21 1431 48 1442 63C1452 78 1453 88 1460 99C1466 110 1476 122 1479 129C1482 136 1479 135 1477 138C1474 141 1466 143 1464 144M0 16C2 20 8 29 10 36C12 43 14 51 14 57C14 63 11 71 9 75C7 79 2 80 0 82M1266 303C1264 303 1255 304 1251 304C1247 304 1246 306 1242 301C1238 297 1229 281 1224 276C1219 271 1223 269 1212 268C1201 267 1172 270 1161 270C1150 269 1148 269 1143 267C1138 265 1135 261 1132 258C1129 255 1127 250 1125 246C1124 242 1124 238 1125 234C1127 230 1130 224 1134 219C1137 214 1139 212 1146 206C1153 201 1168 194 1176 185C1184 176 1192 159 1197 151C1202 144 1204 143 1209 141C1214 140 1218 140 1224 141C1230 143 1236 146 1242 150C1248 154 1257 160 1262 165C1266 170 1269 171 1271 180C1273 189 1271 207 1274 219C1277 231 1285 245 1287 254C1289 263 1290 266 1289 273C1288 280 1285 289 1282 294C1278 299 1269 302 1266 303M714 201C712 201 705 201 702 199C699 197 696 193 694 189C693 185 692 178 693 174C694 170 695 165 699 164C703 162 709 163 714 166C719 169 728 177 731 180C734 183 732 184 732 186C732 188 732 189 729 192C726 195 717 200 714 201M807 222C806 221 802 219 801 216C800 213 800 207 801 204C803 201 807 199 810 198C813 197 820 196 821 198C823 200 820 207 819 210C817 213 815 217 813 219C811 221 808 222 807 222M1485 330C1480 326 1462 314 1454 306C1446 298 1441 292 1435 285C1430 278 1424 267 1422 261C1420 255 1423 253 1425 249C1427 245 1432 241 1437 239C1442 237 1448 236 1452 236C1456 236 1457 236 1464 239C1471 242 1487 253 1494 256C1501 260 1502 260 1506 260C1510 261 1514 261 1521 260C1528 258 1541 253 1545 251M375 283C372 283 364 285 360 285C356 285 351 284 348 283C345 282 343 281 341 279C340 277 339 274 339 270C339 266 340 262 342 258C344 254 347 249 351 246C354 243 357 241 361 240C365 239 370 237 375 238C380 238 387 239 390 243C393 246 394 253 394 258C394 263 393 269 390 273C387 277 377 281 375 283M0 251C2 251 9 250 15 253C21 257 32 268 37 273C41 278 41 279 42 282C42 285 40 288 37 291C34 294 28 300 24 302C20 305 16 305 12 306C8 307 2 306 0 306M1100 330C1104 325 1117 307 1122 301C1127 296 1126 298 1128 297C1130 295 1128 292 1137 295C1146 297 1166 310 1182 314C1198 317 1223 313 1233 316C1243 319 1241 328 1243 330M258 330C263 326 280 312 288 307C296 302 304 300 309 300C314 299 316 299 321 304C326 309 336 326 340 330M629 330C629 327 629 318 630 314C631 311 634 310 636 308C638 306 641 305 645 305C649 305 652 305 660 309C667 313 685 326 690 330M332 0C336 4 353 17 357 22C361 27 359 28 358 30C358 32 356 35 353 36C350 37 348 39 339 39C330 39 314 36 300 38C286 40 262 49 252 51C242 54 240 53 237 52C234 51 234 48 234 45C234 42 233 40 238 33C243 26 260 6 265 0M1230 0C1231 2 1235 8 1236 12C1237 16 1237 20 1236 24C1235 28 1233 34 1230 39C1228 44 1225 48 1220 51C1216 54 1211 57 1203 56C1195 55 1178 47 1170 45C1162 44 1162 44 1158 46C1154 47 1151 48 1146 55C1141 62 1132 81 1128 88C1124 95 1122 96 1119 98C1116 101 1116 102 1110 103C1104 105 1090 104 1086 108C1082 111 1083 114 1084 123C1085 132 1090 150 1091 159C1093 168 1093 171 1092 177C1090 183 1088 191 1085 195C1081 199 1076 201 1071 202C1066 202 1061 201 1056 199C1051 198 1050 200 1041 192C1032 184 1010 162 1002 153C994 144 995 144 992 135C990 126 989 110 988 102C986 94 985 92 982 87C979 82 977 80 969 72C961 64 940 48 933 42C927 36 931 36 930 33C930 30 931 25 933 21C934 17 935 15 939 12C943 8 952 2 955 0M1010 0C1011 4 1017 14 1019 24C1022 34 1023 54 1025 63C1027 72 1026 70 1031 75C1035 80 1042 87 1050 91C1058 96 1072 99 1077 100C1082 101 1080 99 1081 96C1082 93 1083 93 1082 84C1081 75 1075 51 1074 42C1073 33 1074 34 1075 30C1077 26 1078 23 1083 18C1089 13 1102 3 1106 0M1461 136C1458 136 1448 138 1443 137C1438 137 1434 137 1428 132C1422 127 1415 116 1407 109C1399 101 1385 92 1380 87C1375 82 1376 82 1375 78C1375 74 1374 74 1374 66C1375 58 1378 40 1379 33C1381 26 1381 26 1383 24C1386 22 1389 22 1392 23C1395 23 1394 21 1401 28C1408 35 1424 47 1434 63C1445 79 1461 112 1466 123C1471 134 1466 130 1466 132C1465 134 1462 135 1461 136M435 167C430 165 414 160 405 154C396 148 389 139 383 132C377 125 373 116 371 111C369 106 371 105 372 102C373 99 375 96 377 93C380 90 383 87 387 86C391 84 391 81 402 83C413 84 442 92 453 94C464 95 462 94 465 93C468 92 471 90 474 88C477 85 478 86 481 78C484 70 488 47 491 39C493 31 494 32 497 30C499 28 503 27 507 26C511 25 513 24 519 25C525 27 536 30 540 33C545 36 547 39 548 42C549 45 553 41 548 51C542 61 524 93 516 103C508 114 508 112 501 116C494 119 480 121 474 123C468 125 467 126 463 129C459 132 457 135 452 141C447 147 438 163 435 167M780 87C778 87 770 88 765 87C760 85 754 82 750 79C746 76 744 73 743 69C742 65 742 59 744 56C746 53 748 52 753 53C758 54 766 59 771 63C776 67 780 74 782 78C784 82 784 82 783 84C783 86 781 87 780 87M849 138C846 138 839 139 834 138C829 136 823 133 818 129C813 125 807 116 805 111C802 106 802 104 802 102C801 100 799 97 803 96C807 95 818 92 825 93C832 94 838 96 843 101C848 106 851 118 853 123C855 128 854 129 854 132C853 135 850 137 849 138M1269 288C1266 288 1259 290 1251 285C1243 281 1236 266 1221 262C1206 259 1171 264 1158 263C1145 262 1149 261 1145 258C1142 255 1138 250 1136 246C1134 242 1134 238 1135 234C1135 230 1138 223 1141 219C1144 215 1146 213 1152 208C1158 203 1171 197 1179 189C1187 180 1196 163 1201 156C1207 149 1208 149 1212 148C1216 146 1220 146 1224 147C1228 148 1234 151 1239 154C1244 156 1251 161 1255 165C1260 169 1262 173 1264 177C1266 181 1267 182 1267 189C1268 196 1265 212 1267 222C1269 232 1277 244 1279 252C1282 260 1282 262 1282 267C1282 272 1280 278 1278 282C1276 286 1271 287 1269 288M531 297C528 297 518 299 513 299C508 298 501 295 498 293C495 290 494 289 493 282C492 275 494 260 492 252C491 244 488 242 483 237C479 232 474 226 465 222C456 218 439 215 432 212C425 210 426 210 424 207C423 204 421 198 423 192C425 186 425 169 435 168C445 168 468 184 483 188C498 193 518 192 528 195C538 198 541 201 546 208C551 214 556 226 558 234C561 242 562 250 560 258C559 266 552 278 549 284C546 290 543 291 540 293C537 295 532 296 531 297M372 273C370 273 363 274 360 273C357 272 354 270 354 267C353 264 355 258 357 255C360 252 366 249 369 249C372 248 376 248 378 250C380 252 383 255 383 258C384 261 383 264 381 267C379 270 374 272 372 273M959 330C963 328 975 319 979 315C983 311 986 316 986 306C986 296 979 267 979 258C978 249 978 252 981 252C984 251 990 254 996 258C1002 262 1013 271 1017 276C1020 281 1018 280 1016 285C1013 290 1003 301 1000 306C998 311 1000 311 1001 315C1003 319 1007 328 1008 330M0 260C2 261 11 263 15 267C19 270 23 278 25 282C26 286 25 286 24 288C22 290 22 292 18 293C14 294 3 294 0 295M268 330C271 327 282 318 288 314C294 311 298 310 303 310C308 310 311 311 315 314C319 317 327 327 329 330M320 0C323 4 335 16 337 21C340 26 347 25 335 27C322 29 274 33 262 33C249 33 259 29 259 27C258 25 257 26 260 21C263 16 273 4 276 0M1004 0C1006 4 1012 12 1015 24C1018 36 1021 64 1024 75C1027 86 1026 80 1033 87C1040 94 1058 103 1066 114C1074 125 1080 141 1083 151C1086 162 1086 171 1086 177C1085 183 1083 186 1081 189C1079 192 1077 194 1073 195C1070 196 1064 197 1059 196C1054 195 1053 197 1044 189C1035 182 1014 160 1006 150C998 140 998 140 996 132C994 124 993 106 992 99C990 92 990 92 987 87C984 82 982 80 974 72C967 64 947 48 941 42C934 36 937 36 937 33C937 30 938 24 940 21C941 18 943 16 947 12C951 8 960 2 963 0M432 151C430 151 426 153 423 153C420 153 416 153 411 150C406 147 397 142 391 135C386 128 380 116 378 111C376 106 379 105 379 102C380 99 381 97 384 95C387 92 392 89 396 88C400 86 399 84 411 87C423 90 456 105 468 105C480 104 480 94 485 84C489 74 492 54 495 46C498 38 498 39 501 36C504 34 507 33 510 32C513 31 514 30 519 31C524 32 533 37 537 39C541 41 540 42 541 45C541 48 545 44 540 54C535 64 517 93 510 103C503 112 502 110 495 111C488 113 478 105 468 112C458 119 438 144 432 151M1446 127C1444 126 1439 127 1434 123C1429 119 1424 112 1416 105C1408 98 1391 86 1385 81C1380 76 1382 76 1382 72C1381 68 1382 64 1382 60C1383 56 1384 52 1386 49C1388 45 1390 43 1392 41C1394 40 1396 40 1398 40C1400 41 1402 40 1407 45C1412 49 1423 58 1431 70C1439 82 1449 108 1452 117C1456 126 1453 121 1452 123C1451 125 1447 126 1446 127M180 231C177 231 169 231 162 230C155 228 143 225 138 223C133 221 132 219 131 216C129 213 129 211 130 207C131 203 133 197 135 192C138 187 137 186 147 177C158 168 189 146 197 138C205 130 199 138 197 132C194 126 185 112 183 105C180 98 180 97 181 93C182 89 185 85 189 83C193 81 200 80 204 81C207 82 210 84 212 87C214 90 215 97 215 102C215 107 215 111 212 117C210 123 200 128 202 138C204 148 220 168 224 177C228 186 228 187 227 192C227 197 223 202 220 207C217 212 213 216 209 219C205 222 200 225 195 227C190 229 182 230 180 231M1266 273C1264 273 1262 275 1257 273C1252 270 1242 262 1236 259C1230 256 1234 255 1224 255C1214 255 1187 259 1176 259C1165 260 1163 259 1158 257C1153 255 1147 249 1144 246C1141 243 1142 240 1142 237C1141 234 1141 232 1143 228C1145 224 1146 220 1153 213C1160 206 1176 198 1185 189C1195 180 1204 163 1209 157C1214 151 1214 153 1218 153C1222 153 1225 153 1230 155C1235 157 1243 161 1248 165C1253 169 1258 170 1260 180C1262 190 1258 212 1260 225C1262 238 1270 254 1272 261C1274 268 1271 268 1270 270C1269 272 1267 273 1266 273M525 289C524 289 519 290 516 289C513 288 509 287 507 285C505 283 504 281 503 276C502 271 503 261 502 255C501 249 500 246 495 240C490 234 480 223 471 217C462 210 444 206 438 202C432 199 436 197 436 195C437 193 438 190 440 189C443 188 443 185 450 186C457 187 471 194 483 195C495 197 512 197 520 198C528 199 528 200 531 202C534 203 537 204 540 209C543 213 548 220 550 228C552 236 553 246 552 255C550 264 545 273 540 279C536 285 528 287 525 289M108 279C106 279 99 280 96 278C93 277 89 273 88 270C88 267 90 262 93 258C96 254 102 250 105 249C108 248 109 249 111 251C113 253 114 257 114 261C115 265 114 270 113 273C112 276 109 278 108 279M1119 330C1121 328 1127 321 1131 319C1135 316 1129 314 1140 316C1151 318 1188 328 1197 330M279 330C281 329 288 324 291 322C294 320 297 320 300 320C303 320 306 321 309 323C312 324 316 329 317 330M968 330C971 328 983 322 987 321C991 320 991 320 993 322C995 323 1000 329 1002 330M1166 0C1172 1 1192 3 1200 5C1208 6 1209 6 1213 9C1216 12 1220 17 1221 21C1222 25 1220 30 1218 34C1216 37 1212 40 1209 42C1206 43 1207 45 1200 43C1193 41 1175 31 1167 29C1159 27 1156 28 1152 30C1148 31 1148 30 1143 38C1138 46 1127 69 1122 76C1117 84 1116 82 1113 83C1110 84 1107 84 1104 82C1101 81 1099 79 1096 75C1094 71 1092 65 1090 60C1088 55 1087 50 1086 45C1086 40 1086 37 1088 33C1090 29 1090 26 1098 21C1105 16 1126 4 1132 0M300 9C299 9 296 10 295 9C295 8 296 6 297 6C298 6 300 9 300 9M501 99C500 99 495 100 494 99C492 98 490 101 491 93C493 85 498 58 501 49C504 40 506 41 510 39C514 38 521 38 525 39C529 40 531 42 532 45C533 48 535 50 532 57C529 64 518 81 513 88C508 95 503 97 501 99M429 144C428 144 423 146 420 146C417 146 415 147 411 144C407 142 399 138 395 132C390 126 386 116 385 111C383 106 385 104 386 102C387 100 388 98 391 96C393 94 398 92 402 91C406 90 412 90 417 91C422 92 428 94 434 96C439 98 445 102 447 105C450 108 451 111 451 114C452 117 451 119 449 123C447 127 441 134 438 138C435 141 430 143 429 144M183 225C180 225 171 226 165 225C159 224 152 221 148 219C144 217 141 213 139 210C138 207 138 204 138 201C139 198 140 194 143 189C146 184 150 179 156 174C162 169 171 163 177 160C183 157 188 156 192 156C196 156 198 157 201 160C204 162 207 167 210 171C212 175 213 179 214 183C215 187 215 191 215 195C214 199 212 204 211 207C209 210 209 212 204 215C199 218 186 224 183 225M1194 252C1190 253 1179 255 1173 255C1167 254 1162 253 1158 251C1154 248 1150 244 1149 240C1148 236 1149 230 1150 225C1152 220 1154 218 1161 213C1167 208 1179 201 1188 193C1197 184 1206 168 1212 162C1218 157 1218 159 1221 159C1224 159 1228 159 1233 161C1238 164 1244 167 1248 172C1252 176 1255 174 1255 186C1256 198 1251 233 1249 243C1246 253 1251 245 1242 247C1233 248 1202 252 1194 252M1479 285C1478 286 1475 287 1473 286C1471 286 1469 285 1467 283C1465 281 1463 278 1462 276C1461 274 1461 271 1462 270C1463 269 1465 267 1467 268C1469 268 1474 271 1476 272C1478 274 1480 277 1480 279C1481 281 1479 284 1479 285M1002 78C996 75 977 62 969 57C961 51 959 48 956 45C953 42 952 39 951 36C950 33 950 30 951 27C951 24 951 22 955 18C960 14 970 7 975 5C980 2 981 3 984 3C987 3 990 2 993 5C996 9 1002 14 1005 22C1008 30 1009 46 1009 54C1009 62 1008 68 1006 72C1005 76 1003 77 1002 78M1203 33C1201 33 1192 32 1189 30C1186 28 1184 26 1183 24C1182 22 1180 20 1181 18C1183 16 1190 14 1194 14C1198 13 1203 16 1206 17C1209 18 1209 19 1209 21C1210 23 1211 25 1210 27C1209 29 1204 32 1203 33M510 73C509 72 507 72 507 69C506 66 506 60 507 57C508 53 511 50 513 49C515 47 517 47 519 48C521 48 522 49 523 51C524 53 525 56 522 60C520 64 512 71 510 73M1065 184C1063 184 1056 184 1053 183C1050 182 1051 185 1044 177C1037 169 1016 146 1010 135C1003 124 1005 119 1005 112C1005 106 1006 99 1007 96C1008 93 1008 92 1011 92C1014 92 1019 95 1023 97C1027 100 1031 102 1036 108C1040 114 1044 127 1050 135C1056 143 1066 150 1069 156C1073 162 1074 169 1073 174C1073 179 1066 182 1065 184M426 139C424 139 416 141 411 139C406 136 399 131 396 126C393 121 390 116 390 111C390 106 394 101 396 99C398 96 401 95 405 95C409 94 416 94 420 95C424 96 428 98 432 100C436 102 439 106 441 108C443 110 443 112 443 114C443 116 443 120 442 123C440 126 438 130 435 133C432 135 428 138 426 139M1185 249C1182 249 1174 250 1170 249C1166 248 1161 246 1158 243C1156 240 1155 238 1155 234C1155 230 1153 228 1159 222C1165 216 1180 207 1190 198C1199 189 1209 174 1215 169C1221 163 1223 166 1227 166C1231 167 1235 169 1238 171C1241 173 1245 176 1246 180C1248 184 1250 184 1249 192C1248 200 1243 223 1239 231C1235 238 1236 236 1227 239C1218 242 1192 248 1185 249M525 233C524 233 521 234 519 233C517 232 513 230 511 228C509 226 507 224 506 222C506 220 505 217 507 215C509 213 513 212 516 212C519 213 523 214 525 216C527 218 529 222 529 225C529 228 526 232 525 233M996 64C994 64 990 64 987 63C984 62 983 62 978 58C973 54 962 44 959 39C955 34 957 32 957 30C957 28 956 27 959 24C961 21 967 14 972 12C977 10 982 8 987 10C992 11 997 17 999 21C1002 25 1002 28 1003 33C1004 38 1004 44 1004 48C1003 52 1002 57 1000 60C999 63 997 63 996 64M423 133C421 133 415 134 411 133C407 131 402 127 400 123C398 119 396 115 396 111C397 107 399 104 402 102C405 100 412 98 417 99C422 100 430 106 434 108C437 110 436 112 436 114C436 116 437 120 434 123C432 126 425 131 423 133M1026 131C1025 131 1022 130 1020 129C1018 128 1018 126 1017 124C1016 122 1016 119 1017 117C1017 115 1018 113 1020 114C1022 114 1026 118 1028 120C1029 122 1029 124 1029 126C1029 128 1026 130 1026 131M1059 175C1057 174 1052 173 1050 171C1048 169 1047 167 1046 165C1046 163 1046 159 1047 158C1048 156 1051 156 1053 157C1055 158 1059 160 1061 162C1062 164 1063 169 1063 171C1063 173 1060 174 1059 175M1188 244C1186 244 1180 245 1176 244C1172 244 1169 243 1167 241C1165 239 1163 237 1163 234C1162 231 1159 230 1165 225C1170 220 1186 209 1194 201C1203 193 1210 182 1215 178C1220 174 1221 175 1224 174C1227 174 1231 176 1233 177C1236 178 1238 180 1239 183C1240 186 1242 188 1241 195C1240 202 1236 216 1233 222C1230 229 1228 229 1221 233C1214 236 1194 242 1188 244"/><path stroke-dasharray="6 5" d="M72 21C73 20 76 17 76 15C77 13 76 9 75 7C74 5 71 3 69 2C67 1 65 1 63 2C61 4 59 7 58 9C58 11 58 13 59 15C60 17 62 20 64 21C66 22 71 21 72 21M636 258C638 257 648 254 651 252C655 250 657 247 657 243C657 239 654 229 651 225C648 221 643 219 639 219C635 218 630 220 627 221C624 222 620 224 618 226C616 229 614 231 612 234C611 237 611 240 611 243C611 246 611 250 612 252C614 254 614 257 618 258C622 259 633 258 636 258M958 174C958 173 961 180 960 168C959 156 954 117 952 105C949 93 948 98 945 96C942 93 940 91 936 91C932 90 922 90 918 92C914 94 911 98 910 102C909 106 907 103 912 114C918 125 936 156 942 166C948 176 948 172 951 173C954 175 957 174 958 174M1511 222C1512 222 1515 220 1516 219C1518 218 1520 216 1520 213C1519 210 1518 202 1516 198C1514 194 1510 191 1506 190C1502 189 1494 190 1491 192C1488 193 1487 195 1487 198C1487 201 1489 206 1491 210C1493 214 1497 217 1500 219C1503 221 1509 222 1511 222M77 330C75 329 70 326 66 326C62 326 57 329 56 330M980 192C981 191 985 193 983 186C980 179 968 162 964 150C960 138 962 121 960 112C958 104 956 101 954 97C952 93 948 91 945 88C942 86 937 84 933 83C929 82 925 82 921 83C917 83 912 85 909 87C906 89 902 93 901 96C899 99 895 92 900 105C906 118 925 158 934 171C942 184 946 183 952 186C957 189 964 191 969 192C974 193 978 192 980 192M1518 228C1519 227 1523 225 1524 222C1526 219 1528 215 1528 210C1528 205 1526 199 1524 195C1522 190 1519 185 1515 182C1511 179 1507 177 1500 177C1493 178 1479 184 1474 186C1469 188 1471 190 1471 192C1470 194 1469 194 1472 198C1475 202 1483 214 1489 219C1494 224 1498 227 1503 229C1508 230 1515 228 1518 228M85 330C83 329 78 323 75 322C72 320 69 320 66 320C63 320 60 320 57 322C54 323 49 329 47 330M447 63C447 62 451 59 451 57C452 55 453 54 451 51C450 48 447 44 442 42C437 40 428 40 423 41C418 42 414 45 413 48C411 51 413 55 415 57C416 59 420 61 423 63C426 64 431 65 435 65C439 65 445 63 447 63M66 186C74 183 105 173 117 167C129 162 133 157 139 153C144 149 146 144 149 141C151 138 151 135 151 132C151 129 151 126 150 123C149 120 148 117 144 114C140 111 134 106 126 104C118 102 107 101 99 101C91 101 84 102 78 104C72 106 68 108 63 112C58 117 53 123 50 132C47 141 44 160 43 168C42 176 44 176 45 179C46 182 49 185 51 187C53 188 55 188 57 188C59 188 64 186 66 186M1044 234C1044 234 1046 232 1045 231C1045 230 1044 227 1040 225C1036 223 1021 218 1019 219C1017 220 1026 229 1029 231C1032 234 1033 234 1035 234C1037 235 1042 234 1044 234M32 0C32 2 30 9 32 15C34 21 38 32 42 38C46 44 50 48 54 51C58 53 64 55 69 55C74 55 82 52 87 49C92 46 96 41 99 36C101 31 103 24 103 18C103 12 99 3 99 0M450 69C451 68 456 66 457 63C459 60 460 57 460 54C460 51 459 48 457 45C456 42 453 40 450 38C447 36 442 35 438 34C434 34 428 33 423 34C418 35 414 36 411 38C408 40 405 42 404 45C402 48 402 51 403 54C404 57 406 60 411 63C416 66 426 69 432 70C438 71 447 69 450 69M1055 243C1056 242 1060 237 1060 234C1060 231 1062 230 1055 225C1049 220 1034 215 1021 204C1009 193 988 170 980 159C972 148 975 150 973 141C970 132 970 112 967 102C964 92 959 89 955 84C950 79 945 76 939 74C933 72 927 70 921 70C915 70 909 72 903 74C897 76 888 81 885 84C881 87 881 90 881 93C880 96 879 98 883 105C887 112 900 126 906 138C912 150 916 166 920 174C924 182 925 182 929 186C934 190 937 192 948 198C959 203 982 210 996 218C1010 225 1021 237 1029 241C1037 246 1040 245 1044 245C1048 245 1053 243 1055 243M1341 330C1345 327 1361 317 1367 312C1372 307 1372 304 1373 300C1374 296 1374 293 1372 285C1369 277 1360 260 1357 252C1355 244 1357 241 1359 237C1361 233 1361 232 1368 228C1375 224 1395 216 1401 213C1408 210 1405 210 1406 207C1407 204 1408 201 1408 198C1407 195 1404 192 1401 189C1398 186 1393 183 1389 181C1385 179 1384 178 1377 178C1370 177 1356 178 1350 176C1344 175 1342 172 1339 168C1336 164 1333 158 1333 150C1333 142 1339 124 1338 117C1338 110 1340 109 1332 107C1324 105 1306 107 1293 105C1280 103 1263 97 1254 97C1245 97 1244 103 1241 105C1239 107 1239 108 1239 111C1239 114 1239 116 1241 120C1242 124 1243 126 1249 132C1255 138 1270 150 1276 156C1283 162 1281 156 1286 168C1291 180 1304 212 1308 231C1312 250 1310 268 1310 282C1309 296 1307 307 1305 315C1303 323 1300 328 1299 330M941 309C942 308 946 308 948 306C950 304 953 300 954 297C955 294 956 289 955 285C955 281 953 276 952 273C950 270 948 267 945 265C942 262 940 260 936 260C932 259 922 260 918 260C914 261 914 262 913 264C912 266 911 266 912 270C913 274 916 285 919 291C922 297 926 303 929 306C933 309 939 308 941 309M184 0C182 1 180 4 174 8C168 11 151 17 145 21C140 25 140 26 140 30C139 34 140 39 142 42C144 45 147 47 153 46C159 46 165 46 177 39C189 31 219 6 227 0M1545 182C1544 175 1541 147 1540 138C1538 129 1538 133 1536 131C1534 129 1530 127 1527 126C1524 126 1522 126 1518 130C1514 133 1509 143 1504 147C1500 151 1502 153 1491 156C1481 159 1455 162 1443 166C1431 170 1424 178 1419 181C1414 183 1416 182 1410 180C1404 178 1389 171 1380 168C1371 166 1361 167 1356 166C1351 165 1350 164 1348 162C1346 160 1345 158 1344 156C1343 154 1342 154 1343 147C1345 140 1353 125 1353 114C1352 103 1341 92 1340 81C1339 70 1346 62 1346 51C1346 40 1341 25 1340 18C1339 11 1340 12 1341 9C1343 6 1347 2 1348 0M810 330C807 323 797 302 793 288C788 274 787 254 783 243C779 232 773 224 769 219C765 214 762 213 759 212C756 210 758 209 750 211C742 212 717 221 708 223C699 225 700 225 696 223C692 222 690 222 684 214C678 207 666 185 660 178C654 172 656 175 651 175C646 175 635 177 630 177C625 176 623 176 621 174C618 172 616 169 615 165C614 161 614 154 615 150C616 146 617 144 621 138C625 133 637 122 641 117C644 112 643 111 643 108C643 105 643 102 641 99C639 96 636 91 631 87C626 83 619 78 612 74C605 71 598 69 591 68C584 66 578 66 573 66C568 66 565 66 561 68C557 70 555 68 549 77C543 85 535 108 525 119C515 130 497 138 490 144C483 150 484 152 484 156C484 160 486 162 489 165C491 168 490 169 497 171C505 173 523 176 531 178C539 180 541 181 546 185C551 188 556 193 561 198C566 203 571 210 575 216C578 222 579 228 581 234C582 240 584 239 583 255C582 271 577 318 576 330M58 243C60 241 67 238 70 231C74 224 75 210 77 204C79 198 74 201 82 195C91 189 118 177 129 170C140 163 145 158 149 153C154 148 157 145 159 141C161 137 162 134 162 129C161 124 160 119 157 114C154 109 148 101 144 97C140 92 136 90 132 88C128 86 130 86 120 85C110 85 86 83 75 85C64 88 60 93 54 99C48 104 46 105 41 117C36 129 28 156 26 168C23 180 22 174 24 186C27 198 35 227 39 237C43 247 45 243 48 244C51 245 57 243 58 243M231 330C242 320 285 286 298 273C310 260 306 260 308 255C309 250 307 244 306 242C305 239 312 239 300 240C288 240 253 243 237 245C221 248 213 251 206 255C200 259 199 260 198 267C197 274 200 287 200 294C200 301 200 303 198 309C196 315 189 326 187 330M103 330C101 327 93 315 87 311C81 306 71 305 66 303C61 302 60 303 57 305C54 306 50 306 45 310C40 315 29 327 26 330M169 0C162 2 134 11 126 13C118 15 122 12 120 10C118 8 114 2 113 0M732 0C734 2 738 3 743 9C748 15 754 26 763 36C773 46 793 64 801 70C809 77 806 74 813 76C820 78 838 80 846 82C854 84 854 84 858 89C862 95 867 106 873 114C879 123 890 130 896 141C902 152 905 171 909 180C913 189 916 190 921 195C926 199 928 200 939 205C950 210 970 216 984 224C998 232 1009 245 1023 252C1037 258 1060 260 1068 264C1076 268 1071 270 1070 273C1070 276 1068 282 1065 285C1063 288 1062 290 1056 294C1050 298 1034 305 1029 309C1023 313 1025 314 1024 318C1023 322 1024 328 1024 330M1415 0C1417 4 1420 14 1427 24C1433 34 1445 45 1453 57C1460 69 1462 83 1470 94C1478 104 1495 114 1501 120C1506 126 1502 126 1502 129C1502 132 1502 134 1500 138C1497 142 1490 149 1485 152C1480 155 1478 155 1470 156C1462 157 1448 157 1438 159C1428 161 1417 166 1410 167C1403 167 1402 165 1395 162C1388 159 1373 154 1369 147C1365 140 1372 134 1370 123C1367 112 1357 96 1354 84C1352 72 1356 58 1355 48C1354 38 1349 28 1349 21C1348 14 1349 12 1351 9C1353 6 1358 2 1359 0M287 126C290 125 298 123 303 120C308 118 310 117 318 111C326 104 345 90 351 84C358 78 357 78 359 75C360 72 363 72 359 69C356 66 348 62 339 60C331 58 318 56 309 56C300 57 293 59 285 62C277 65 266 71 261 75C256 79 255 81 254 84C252 87 251 88 250 93C250 98 251 107 252 111C254 115 256 117 258 119C260 121 262 123 267 125C272 126 284 126 287 126M938 324C941 322 951 319 956 315C960 311 964 306 965 300C967 294 966 286 964 279C963 272 958 263 954 258C950 253 948 250 939 247C930 244 916 244 903 240C890 236 872 226 864 223C856 220 856 221 852 221C848 222 845 223 842 225C840 227 838 231 837 234C837 237 835 236 838 243C841 250 850 267 855 273C860 279 862 279 867 281C872 282 883 281 888 282C893 283 893 283 896 285C899 287 901 288 904 294C908 300 914 316 918 321C922 326 924 325 927 325C930 326 937 324 938 324M606 330C606 328 608 320 610 315C612 310 614 307 618 303C622 299 628 295 633 293C638 291 642 290 648 290C654 291 658 290 666 295C674 299 686 311 696 317C706 322 721 328 726 330M0 242C2 241 6 239 9 239C12 239 11 237 15 240C19 243 28 254 33 257C38 261 41 263 45 263C49 264 52 264 57 262C62 259 68 255 72 250C76 245 80 242 84 234C88 226 86 216 98 204C109 192 141 170 153 159C165 148 166 147 169 141C172 135 173 132 171 123C169 114 159 96 157 87C155 78 157 76 160 72C162 68 163 67 170 63C177 59 188 58 201 48C214 37 239 8 246 0M716 0C719 2 728 6 735 12C742 18 744 25 755 36C766 47 787 68 801 77C815 85 832 83 840 86C848 89 847 87 852 93C857 99 864 112 870 121C876 130 886 135 891 145C896 155 899 174 903 183C907 192 909 194 915 199C921 204 928 207 939 212C950 217 968 221 981 229C994 236 1008 250 1020 257C1032 264 1049 267 1055 270C1061 273 1058 274 1058 276C1057 278 1059 281 1054 285C1049 289 1034 296 1028 300C1023 304 1022 306 1020 309C1018 312 1018 314 1017 318C1017 322 1019 328 1019 330M1257 0C1255 8 1245 35 1241 45C1237 55 1236 54 1233 58C1230 62 1228 64 1224 66C1220 68 1216 71 1206 69C1196 68 1175 59 1167 57C1159 55 1161 57 1158 59C1155 61 1154 58 1149 68C1144 78 1135 105 1128 117C1121 129 1113 125 1108 141C1103 157 1100 200 1099 213C1098 226 1100 218 1101 220C1102 222 1104 224 1107 224C1110 223 1111 226 1122 219C1133 212 1161 192 1173 180C1185 168 1188 153 1194 145C1200 137 1204 135 1209 133C1214 132 1216 131 1224 135C1232 138 1247 148 1254 154C1261 159 1264 161 1267 165C1271 169 1272 168 1275 177C1277 186 1278 204 1281 216C1283 228 1289 240 1292 249C1294 258 1295 264 1295 270C1295 276 1294 282 1293 287C1292 292 1293 294 1287 301C1281 309 1263 325 1259 330M708 210C706 209 697 208 693 204C690 200 687 196 685 189C683 182 681 166 681 159C680 152 681 148 681 144C682 140 683 138 684 138C685 137 682 134 690 139C698 144 722 161 731 168C741 175 744 180 747 183C749 186 748 186 747 189C745 192 742 195 738 198C733 201 726 205 721 207C716 209 710 210 708 210M125 330C120 326 103 309 94 303C86 297 81 296 75 294C69 292 64 291 60 291C56 290 56 289 51 292C46 296 34 305 27 309C20 314 10 317 6 319C2 322 3 322 2 324C1 326 2 329 2 330M695 0C700 2 716 10 723 15C731 20 730 26 739 33C747 40 763 49 773 57C783 65 788 77 798 82C808 88 826 88 834 90C842 92 841 89 846 96C851 103 860 120 866 129C873 138 880 141 885 150C890 160 892 178 894 186C897 194 898 197 901 201C903 205 905 207 909 210C913 214 926 220 928 222C929 224 928 224 919 222C911 220 887 212 876 208C865 203 857 198 852 195C847 192 848 194 847 189C847 184 849 174 849 168C848 162 850 162 844 156C839 150 825 144 816 135C807 126 799 109 789 101C779 94 764 93 756 90C748 86 746 84 743 81C739 78 738 76 735 69C733 62 731 48 728 42C726 36 724 36 720 34C716 32 708 29 702 29C696 28 692 29 687 31C682 33 680 35 675 41C670 47 664 61 660 66C656 70 654 68 651 68C648 68 644 66 642 65C640 63 637 60 636 58C635 56 634 56 634 51C635 46 640 35 641 30C642 25 643 26 641 21C639 16 632 4 630 0M1545 82C1544 82 1541 82 1539 80C1537 78 1535 77 1533 72C1531 67 1530 54 1528 48C1526 42 1527 41 1521 33C1514 25 1494 6 1488 0M528 306C524 306 508 306 501 305C494 303 490 300 487 297C484 294 484 292 484 285C484 278 486 265 486 258C485 251 484 248 480 243C475 238 468 230 459 226C450 222 430 221 423 218C416 216 416 215 414 213C412 211 412 210 412 204C412 198 415 186 415 180C415 174 422 182 413 171C404 160 369 127 360 117C351 107 356 116 358 111C360 106 366 95 371 90C376 85 381 81 387 80C393 78 394 77 405 79C416 80 442 87 453 88C464 89 464 88 468 84C472 81 477 76 480 67C483 57 484 34 486 27C488 20 489 23 492 22C495 21 499 19 504 19C509 19 516 19 522 20C528 21 534 22 540 25C546 29 554 35 557 39C560 43 561 42 558 48C555 54 544 64 537 75C530 86 521 104 516 111C510 118 511 116 503 120C495 124 475 131 468 135C461 139 461 140 459 144C457 148 455 152 455 156C455 160 457 164 461 168C465 172 474 178 480 181C486 184 488 184 495 186C502 187 518 188 525 190C532 191 535 193 538 195C542 197 546 200 549 204C552 208 556 212 559 219C562 226 566 237 567 246C568 255 567 263 564 272C561 280 553 292 549 298C545 303 544 302 540 303C536 305 530 306 528 306M951 330C954 328 966 320 970 315C974 310 977 306 977 297C977 288 975 274 971 264C967 254 955 240 952 234C949 228 951 232 952 231C952 230 952 229 957 230C962 231 972 232 981 237C990 241 1001 252 1011 259C1021 265 1037 272 1042 276C1047 280 1045 279 1041 282C1037 285 1025 292 1020 296C1015 300 1014 303 1012 306C1011 309 1010 311 1010 315C1011 319 1013 328 1014 330M834 330C833 325 833 310 829 300C826 290 817 279 814 273C812 267 813 266 814 264C814 262 815 259 816 259C817 258 820 259 822 261C824 263 828 267 831 273C834 279 835 290 839 297C843 304 852 312 855 318C858 324 857 328 857 330M1545 306C1543 306 1536 306 1533 307C1530 308 1528 310 1526 312C1525 314 1526 318 1527 321C1528 324 1532 328 1533 330M675 16C674 16 668 18 666 16C664 15 662 7 663 6C665 5 673 8 675 9C677 10 677 11 677 12C677 13 675 15 675 16M159 313C156 313 148 315 141 312C134 309 127 302 118 297C109 292 94 288 87 285C80 282 81 282 79 279C77 276 76 273 76 270C76 267 74 268 80 261C85 254 100 238 109 225C118 212 122 200 134 186C146 172 173 151 181 141C189 131 184 134 183 126C181 118 174 100 173 93C171 86 173 84 176 81C178 78 182 75 189 72C196 70 213 68 219 68C225 68 223 70 224 72C225 74 225 68 225 81C225 94 222 134 223 147C224 160 226 156 231 161C236 167 247 175 251 180C255 185 254 188 255 191C256 194 256 197 255 200C254 202 253 204 249 206C245 208 240 208 231 213C222 217 202 230 192 234C182 238 182 237 174 237C166 237 148 233 141 234C134 234 132 236 129 240C127 244 126 252 126 258C127 264 130 272 132 275C134 278 133 278 138 278C143 279 156 278 162 280C168 282 170 286 172 288C174 290 174 292 174 294C174 296 175 300 172 303C170 306 161 311 159 313M1545 294C1541 294 1526 292 1521 294C1516 295 1515 297 1512 301C1509 305 1505 315 1503 318C1500 321 1499 320 1497 321C1495 321 1496 322 1491 320C1486 318 1476 314 1470 310C1464 306 1459 302 1454 297C1450 292 1444 285 1441 279C1438 273 1436 266 1436 261C1436 256 1438 252 1441 249C1444 246 1451 244 1455 244C1459 243 1460 244 1467 247C1474 250 1487 259 1494 263C1501 267 1504 268 1509 269C1514 269 1515 269 1521 268C1527 267 1541 262 1545 260M1109 330C1112 327 1120 315 1125 311C1130 306 1128 304 1137 306C1146 307 1166 317 1179 320C1192 323 1207 324 1215 325C1223 327 1225 329 1227 330M1212 0C1214 1 1221 4 1224 7C1227 10 1228 14 1229 18C1229 22 1228 29 1226 33C1225 37 1221 42 1218 44C1215 47 1212 48 1209 49C1206 50 1207 52 1200 50C1193 48 1174 40 1167 38C1160 36 1159 37 1155 39C1151 41 1148 42 1143 50C1138 58 1127 79 1122 86C1117 93 1116 91 1113 92C1110 93 1107 93 1104 93C1101 93 1099 92 1097 90C1095 88 1093 88 1091 81C1088 74 1083 58 1082 51C1080 44 1079 41 1080 36C1081 31 1082 27 1088 21C1094 15 1111 4 1116 0M837 127C836 127 831 128 828 127C825 126 821 123 818 120C816 117 813 114 813 111C812 108 813 104 815 102C817 100 821 100 825 100C829 101 834 102 837 105C840 108 842 114 843 117C844 120 843 121 842 123C841 125 838 127 837 127M1485 303C1482 303 1475 303 1470 300C1465 297 1458 290 1454 285C1450 280 1447 272 1447 267C1447 262 1450 257 1452 255C1454 253 1458 253 1461 253C1464 253 1464 252 1470 256C1476 260 1494 274 1499 279C1505 284 1501 282 1501 285C1500 288 1500 291 1497 294C1495 297 1487 302 1485 303M996 0C998 2 1003 7 1005 11C1007 15 1009 15 1011 26C1013 37 1011 64 1018 78C1024 92 1040 98 1050 111C1060 124 1073 145 1078 156C1083 167 1081 171 1080 177C1079 183 1074 187 1071 189C1068 191 1064 191 1059 191C1054 190 1052 192 1044 184C1036 176 1015 154 1008 144C1001 135 1002 137 1000 129C999 121 999 106 998 99C997 92 1002 97 994 87C985 77 954 48 946 39C937 30 943 34 944 30C944 26 944 23 948 18C953 13 968 3 972 0M1425 90C1422 90 1415 89 1410 87C1405 85 1399 81 1396 78C1393 75 1392 72 1392 69C1392 66 1393 61 1395 59C1397 56 1400 55 1404 56C1408 57 1413 61 1416 64C1419 68 1423 74 1425 78C1426 82 1425 88 1425 90M528 266C527 266 525 269 522 266C519 262 516 254 510 246C505 238 493 224 489 219C484 214 486 215 486 213C486 211 486 209 488 207C491 205 496 204 501 204C506 203 514 203 519 204C524 204 525 205 528 207C531 209 535 212 537 215C539 219 541 223 542 228C542 233 542 238 541 243C541 248 539 252 537 255C535 259 530 264 528 266M1113 73C1112 73 1106 73 1104 71C1102 69 1100 67 1098 63C1096 60 1095 55 1094 51C1093 47 1093 42 1093 39C1094 36 1096 33 1098 30C1100 28 1102 26 1107 24C1112 22 1123 20 1128 20C1133 21 1134 23 1134 27C1135 31 1133 39 1131 45C1129 51 1125 61 1122 66C1119 70 1114 72 1113 73M186 219C184 220 178 221 174 221C170 220 163 219 159 217C155 216 151 213 148 210C146 207 145 204 145 201C145 198 146 193 148 189C151 185 154 181 158 177C163 173 169 169 174 167C179 165 182 164 186 164C190 164 192 165 195 166C198 168 199 168 201 172C203 177 207 186 207 192C207 198 204 205 200 210C197 215 188 218 186 219M1113 60C1112 60 1109 61 1107 59C1105 57 1103 51 1102 48C1102 45 1103 41 1104 39C1106 37 1111 35 1113 34C1115 34 1118 34 1119 36C1121 38 1122 42 1122 45C1122 48 1120 52 1119 54C1118 57 1114 59 1113 60M186 213C184 213 180 215 177 215C174 215 168 215 165 214C162 212 158 210 156 208C154 206 152 204 152 201C151 198 152 195 153 192C154 189 156 186 159 183C161 180 164 177 168 175C172 173 176 171 180 171C184 171 189 171 192 174C195 177 199 184 200 189C200 194 199 200 196 204C194 208 188 212 186 213"/></g></svg>
<div style="position:absolute;left:0;top:0;width:1546px;height:4px;background:linear-gradient(to bottom,#aeaeae,#d6d6d6)"></div>
</div>
<div style="position:absolute;left:466px;top:22px;width:1600px;height:139px;border:1px dotted #0a2250;box-sizing:border-box"></div>
<div style="position:absolute;left:467px;top:23px;width:1600px;height:137px;border:3px solid #f2f4f8;box-sizing:border-box"></div>
<div style="position:absolute;left:467px;top:41px;width:1600px;height:101px;background:#f3f3f3;border-radius:4px;border:1px solid #dcdad6;box-sizing:border-box;box-shadow:0 2px 3px rgba(0,0,0,0.16)"></div>
<div style="position:absolute;left:492px;top:66px;width:48px;height:48px"><svg width="48" height="48" viewBox="0 0 48 48" style="position:absolute;left:0;top:0"><rect width="48" height="48" rx="3" fill="#6a9bdc"/><path d="M24 9.5 L35.5 15.8 L24 22 L12.5 15.8 Z" fill="#fff"/><path d="M11.2 18 L22.6 24.3 L22.6 37.8 L11.2 31.5 Z" fill="#fff"/><path d="M36.8 18 L25.4 24.3 L25.4 37.8 L36.8 31.5 Z" fill="#fff"/></svg></div>
<div class="t" style="left:558.5px;top:66.50px;font-size:19.5px;color:#3e3e3c;">Document Solution</div>
<div class="t" style="left:558.5px;top:90.55px;font-size:27px;color:#181818;font-weight:bold;letter-spacing:-0.700px;">Sales Quote</div>
<div style="position:absolute;left:466px;top:179px;width:1600px;height:900px;border:1px dotted #0a2250;box-sizing:border-box"></div>
<div style="position:absolute;left:467px;top:180px;width:1600px;height:900px;border:3px solid #f2f4f8;box-sizing:border-box"></div>
<div style="position:absolute;left:467px;top:198px;width:1600px;height:325px;background:#fff;border-radius:4px;box-shadow:0 2px 3px rgba(0,0,0,0.15)"></div>
<div style="position:absolute;left:470px;top:201px;width:1600px;height:319px;border:1px solid #2b6cb4;box-sizing:border-box"></div>
<div class="t" style="left:516.5px;top:224.99px;font-size:24px;color:#3e3e3c;letter-spacing:-0.480px;">Details</div>
<div class="t" style="left:671.5px;top:224.99px;font-size:24px;color:#3e3e3c;letter-spacing:-0.200px;">Query Builder</div>
<div class="t" style="left:900.5px;top:224.99px;font-size:24px;color:#3e3e3c;letter-spacing:-0.130px;">Playground</div>
<div class="t" style="left:1105.0px;top:224.99px;font-size:24px;color:#181818;font-weight:bold;letter-spacing:-0.400px;">Advanced Settings</div>
<div style="position:absolute;left:492px;top:268px;width:1502px;height:1px;background:#e5e5e5"></div>
<div style="position:absolute;left:1081px;top:265px;width:258px;height:3px;background:#4f8ff2"></div>
<div style="position:absolute;left:492px;top:293px;width:1600px;height:212px;border:1px dotted #16325c;box-sizing:border-box"></div>
<div class="t" style="left:1414.5px;top:389.50px;font-size:19.5px;color:#16325c;letter-spacing:-0.130px;">Add Component(s) Here</div>
<svg width="18" height="18" viewBox="0 0 18 18" style="position:absolute;left:1510px;top:194px"><circle cx="9" cy="9" r="9" fill="#2b6cb4"/><path d="M9.3 5 V14.5 M4.6 10.2 H14" stroke="#fff" stroke-width="1.4"/></svg>
<svg width="18" height="18" viewBox="0 0 18 18" style="position:absolute;left:1510px;top:510px"><circle cx="9" cy="9" r="9" fill="#2b6cb4"/><path d="M9.3 5 V14.5 M4.6 10.2 H14" stroke="#fff" stroke-width="1.4"/></svg>
<div style="position:absolute;left:467px;top:548px;width:1600px;height:410px;background:#fff;border-radius:4px;overflow:hidden;border:1px solid #cfcfcf;box-sizing:border-box;box-shadow:0 2px 3px rgba(0,0,0,0.15)">
<div style="position:absolute;left:0;top:0;width:1600px;height:147px;background:#f3f3f3"></div>
</div>
<div style="position:absolute;left:492px;top:579px;width:36px;height:36px"><svg width="36" height="36" viewBox="0 0 48 48" style="position:absolute;left:0;top:0"><rect width="48" height="48" rx="3" fill="#6a9bdc"/><path d="M24 9.5 L35.5 15.8 L24 22 L12.5 15.8 Z" fill="#fff"/><path d="M11.2 18 L22.6 24.3 L22.6 37.8 L11.2 31.5 Z" fill="#fff"/><path d="M36.8 18 L25.4 24.3 L25.4 37.8 L36.8 31.5 Z" fill="#fff"/></svg></div>
<div class="t" style="left:547.0px;top:586.69px;font-size:24px;color:#181818;font-weight:bold;letter-spacing:-0.180px;">Document Templates (4)</div>
<div style="position:absolute;left:467px;top:645px;width:1527px;height:1px;background:#c9c9c9"></div>
<div style="position:absolute;left:467px;top:696px;width:1527px;height:1px;background:#c9c9c9"></div>
<div style="position:absolute;left:467px;top:745px;width:1527px;height:1px;background:#c9c9c9"></div>
<div style="position:absolute;left:467px;top:794px;width:1527px;height:1px;background:#c9c9c9"></div>
<div style="position:absolute;left:467px;top:843px;width:1527px;height:1px;background:#c9c9c9"></div>
<div style="position:absolute;left:467px;top:893px;width:1527px;height:1px;background:#c9c9c9"></div>
<div class="t" style="left:493.0px;top:662.50px;font-size:19.5px;color:#3e3e3c;font-weight:bold;">Name</div>
<div class="t" style="left:987.0px;top:662.50px;font-size:19.5px;color:#3e3e3c;font-weight:bold;">Template Type</div>
<div class="t" style="left:1493.0px;top:662.50px;font-size:19.5px;color:#3e3e3c;font-weight:bold;">Template Document Id</div>
<div class="t" style="left:495.0px;top:711.80px;font-size:19.5px;color:#2b74d0;letter-spacing:-0.750px;border-bottom:1px dotted #2b74d0;padding-bottom:3.8px">Test Sales Quote XLSX</div>
<div class="t" style="left:986.5px;top:711.80px;font-size:19.5px;color:#3e3e3c;letter-spacing:-1.600px;">XLSX</div>
<div class="t" style="left:1493.0px;top:711.80px;font-size:19.5px;color:#3e3e3c;letter-spacing:-0.600px;">0687Q00000DcjY0QAJ</div>
<div class="t" style="left:495.0px;top:761.05px;font-size:19.5px;color:#2b74d0;letter-spacing:-0.580px;border-bottom:1px dotted #2b74d0;padding-bottom:3.8px">Test Sales Quote DOCX</div>
<div class="t" style="left:986.5px;top:761.05px;font-size:19.5px;color:#3e3e3c;letter-spacing:-1.000px;">DOCX</div>
<div class="t" style="left:1493.0px;top:761.05px;font-size:19.5px;color:#3e3e3c;letter-spacing:-0.600px;">0687Q00000DcjY1QAJ</div>
<div class="t" style="left:495.0px;top:810.30px;font-size:19.5px;color:#2b74d0;letter-spacing:-0.390px;border-bottom:1px dotted #2b74d0;padding-bottom:3.8px">Test Sales Quote Doc</div>
<div class="t" style="left:986.5px;top:810.30px;font-size:19.5px;color:#3e3e3c;letter-spacing:-0.140px;">Google Doc</div>
<div class="t" style="left:1493.0px;top:810.30px;font-size:19.5px;color:#3e3e3c;letter-spacing:-0.280px;">1in57gjuS8Fs9CpKv9gWhWlgk5TmjdrdV0utN0gwGuvw</div>
<div class="t" style="left:495.0px;top:859.55px;font-size:19.5px;color:#2b74d0;letter-spacing:-0.490px;border-bottom:1px dotted #2b74d0;padding-bottom:3.8px">Test Sales Quote Sheet</div>
<div class="t" style="left:986.5px;top:859.55px;font-size:19.5px;color:#3e3e3c;letter-spacing:-0.330px;">Google Sheet</div>
<div class="t" style="left:1493.0px;top:859.55px;font-size:19.5px;color:#3e3e3c;letter-spacing:-0.800px;">1FW0WXzPYpgcwVcVODMrV_Sd5qRFbYmcS06hoTDRI...</div>
<div class="t" style="left:1486.0px;top:916.80px;font-size:19.5px;color:#2b74d0;letter-spacing:-0.300px;">View All</div>
</body></html>
